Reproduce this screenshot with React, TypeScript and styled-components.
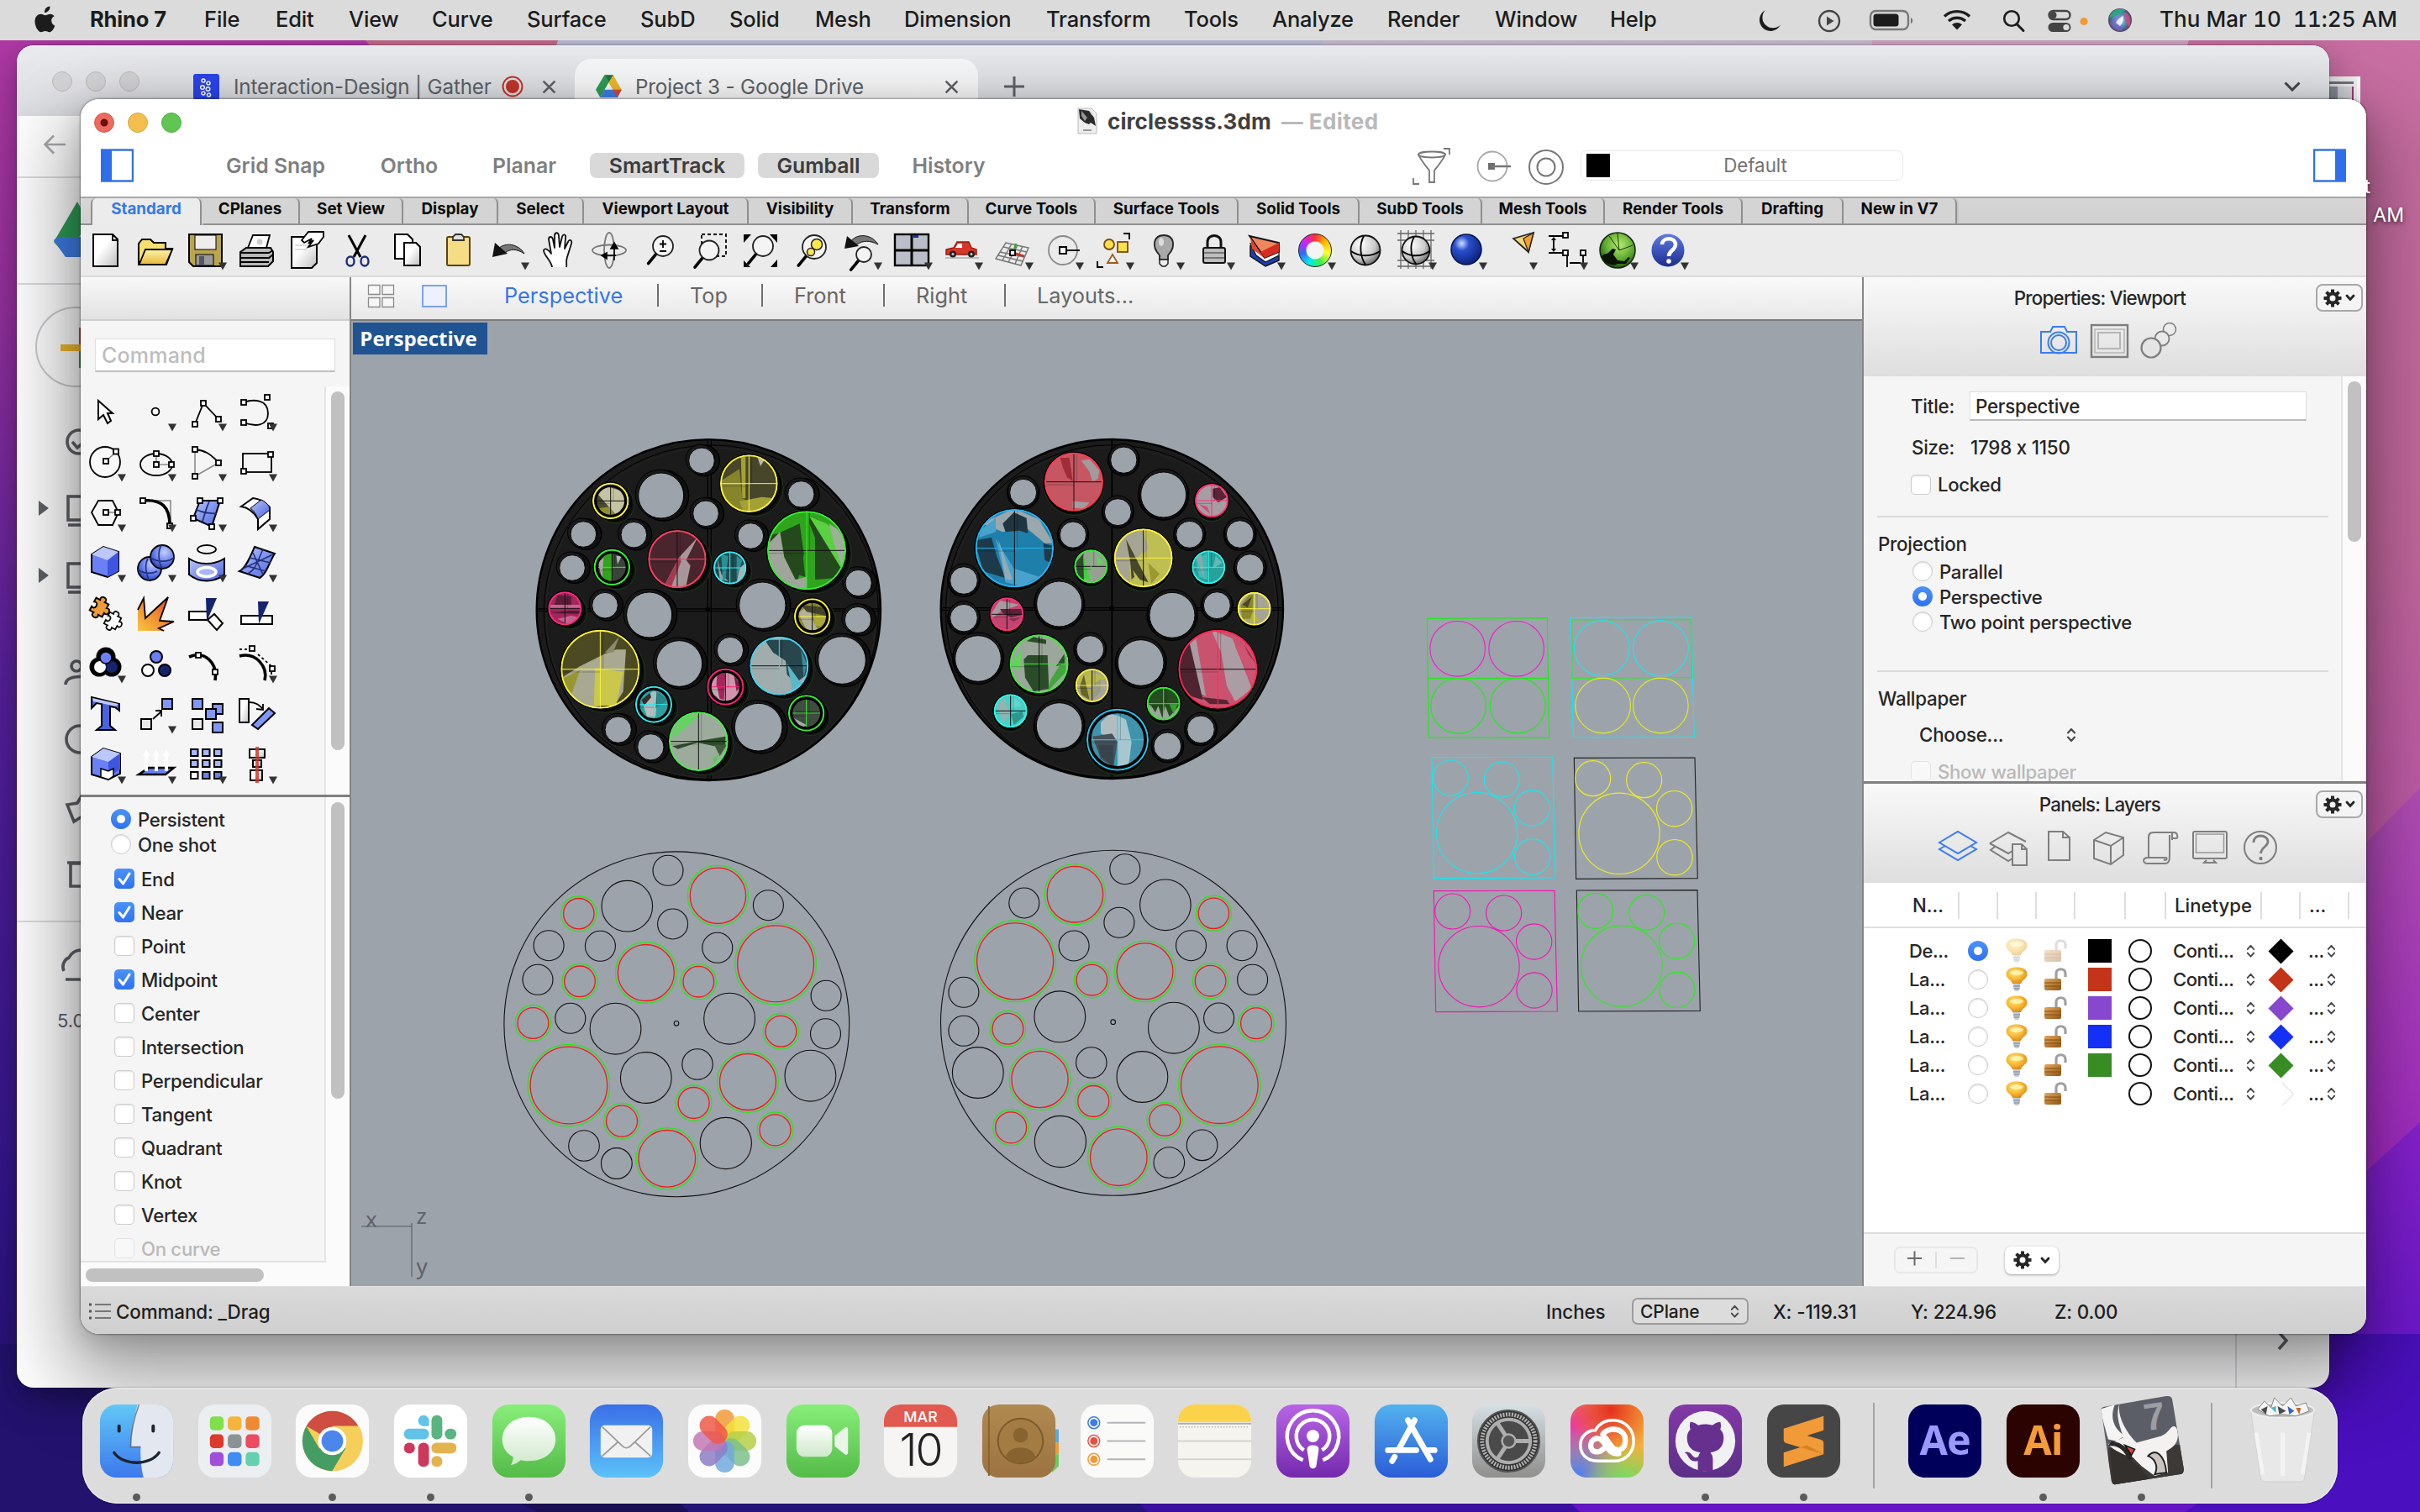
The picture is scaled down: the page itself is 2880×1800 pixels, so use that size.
import React from 'react';
import styled, { createGlobalStyle, css } from 'styled-components';

const UI = '"Inter", "Liberation Sans", sans-serif';
const SCENE = '#9da3ab';

const Global = createGlobalStyle`
  html, body { margin: 0; padding: 0; width: 2880px; height: 1800px; overflow: hidden; }
  * { box-sizing: border-box; }
  body { font-family: ${UI}; color: #262626; font-size: 24px; }
  svg { display: block; flex: none; }
`;

/* ---------- desktop ---------- */

const Desktop = styled.main`
  position: relative;
  width: 2880px;
  height: 1800px;
  overflow: hidden;
`;

const WallpaperSvg = styled.svg`
  position: absolute;
  inset: 0;
`;

function Wallpaper() {
  return (
    <WallpaperSvg width="2880" height="1800" viewBox="0 0 2880 1800">
      <defs>
        <linearGradient id="wr" x1="0" y1="0" x2="0" y2="1">
          <stop offset="0" stopColor="#c96fa3" />
          <stop offset=".35" stopColor="#c56a9f" />
          <stop offset=".56" stopColor="#c25aac" />
        </linearGradient>
        <linearGradient id="wl" x1="0" y1="0" x2="0" y2="1">
          <stop offset="0" stopColor="#b43aa6" />
          <stop offset=".2" stopColor="#96309f" />
          <stop offset=".45" stopColor="#56209a" />
          <stop offset=".8" stopColor="#32168a" />
          <stop offset="1" stopColor="#20126a" />
        </linearGradient>
        <linearGradient id="wm" x1="0" y1="0" x2="0" y2="1">
          <stop offset="0" stopColor="#b650b8" />
          <stop offset="1" stopColor="#a022cc" />
        </linearGradient>
        <linearGradient id="wv" x1="0" y1="0" x2="0" y2="1">
          <stop offset="0" stopColor="#8a22d2" />
          <stop offset="1" stopColor="#5810cf" />
        </linearGradient>
      </defs>
      <rect width="2880" height="1800" fill="url(#wr)" />
      <rect width="1400" height="1800" fill="url(#wl)" />
      <path d="M435 48H700L640 90H470Z" fill="#c46a8c" />
      <path d="M664 48H2020V90H650Z" fill="#bcbdd6" />
      <path d="M1574 48H2230V90H1574Z" fill="#cbbdd2" />
      <path d="M2228 48H2605L2590 90H2228Z" fill="#d0a3c4" />
      <path d="M2880 938L2700 1120V1500H2880Z" fill="url(#wm)" />
      <path d="M2880 1336L2700 1500V1800H2880Z" fill="url(#wv)" />
      <path d="M0 1600H2880V1800H0Z" fill="#23136f" />
      <path d="M600 1780L790 1775L830 1800H640Z" fill="#1a0f55" />
      <path d="M790 1770H1340L1370 1800H820Z" fill="#25147a" />
      <path d="M1330 1760H1850L1885 1800H1365Z" fill="#3a0fa2" />
      <path d="M1850 1770H2700L2640 1800H1880Z" fill="#6514c8" />
      <path d="M2600 1800C2700 1740 2720 1640 2730 1588H2880V1800Z" fill="#4a0fbe" />
    </WallpaperSvg>
  );
}

/* ---------- menu bar ---------- */

const MenuBarRow = styled.header`
  position: absolute;
  inset: 0 0 auto 0;
  height: 48px;
  display: flex;
  align-items: center;
  background: #dbdbdb;
  color: #1c1c1c;
  font-size: 25.5px;
  letter-spacing: -0.15px;
  padding-left: 39px;
`;
const MenuItem = styled.span<{ $w: number; $bold?: boolean }>`
  width: ${(p) => p.$w}px;
  padding-bottom: 3px;
  white-space: pre;
  font-weight: ${(p) => (p.$bold ? 700 : 450)};
`;
const StatusGlyphs = styled.svg`
  margin-left: auto;
  margin-right: 28px;
`;
const Clock = styled.span`
  white-space: pre;
  width: 310px;
  padding-bottom: 3px;
  font-size: 26px;
  font-weight: 450;
  font-variant-numeric: tabular-nums;
  letter-spacing: 0.05px;
`;

const MENUS: [string, number][] = [
  ['File', 85], ['Edit', 87], ['View', 99], ['Curve', 113], ['Surface', 135], ['SubD', 106],
  ['Solid', 102], ['Mesh', 106], ['Dimension', 169], ['Transform', 164], ['Tools', 105],
  ['Analyze', 137], ['Render', 128], ['Window', 137], ['Help', 60],
];

function MenuBar() {
  return (
    <MenuBarRow>
      <svg width="68" height="34" viewBox="0 0 68 34">
        <path
          fill="#1c1c1c"
          d="M20.5 0.5c.2 2.3-.7 4.2-2 5.6c-1.3 1.4-3 2.1-4.6 2c-.2-2.2.8-4.2 2-5.5c1.3-1.3 3.1-2.1 4.6-2.1zM25.5 12.2c-2.2 1.4-3.3 3-3.3 5.4c0 2.9 1.6 5 4.1 6.1c-1 3-3.7 7.6-6.6 7.6c-1.9 0-2.5-1.2-4.8-1.2c-2.3 0-3 1.2-4.8 1.2C6.5 31.3 2.5 24.5 2.5 18.5c0-5.4 3.4-8.7 7.2-8.7c2.2 0 3.9 1.5 5.3 1.5c1.4 0 3.3-1.6 6-1.6c1.9 0 3.5.9 4.5 2.5z"
        />
      </svg>
      <MenuItem $w={136} $bold>Rhino 7</MenuItem>
      {MENUS.map(([t, w]) => <MenuItem key={t} $w={w}>{t}</MenuItem>)}
      <StatusGlyphs width="450" height="48" viewBox="2093 0 450 48">
        <path d="M2102 12A13.2 13.2 0 1 0 2120 29.500A12.500 12.500 0 0 1 2102 12Z" fill="#1c1c1c" />
        <g fill="none" stroke="#444" strokeWidth="2.4">
          <circle cx="2178" cy="25" r="12" />
          <path d="M2175 19.500l8.500 5.500l-8.500 5.500z" fill="#444" stroke="none" />
          <rect x="2227" y="13" width="45" height="22" rx="6.5" stroke="#777" />
          <rect x="2230.5" y="16.5" width="30" height="15" rx="3.5" fill="#1c1c1c" stroke="none" />
          <path d="M2275 21v7c3-1 3-6 0-7z" fill="#777" stroke="none" />
        </g>
        <g fill="none" stroke="#1c1c1c" strokeWidth="3.4">
          <path d="M2315 19.500a22 22 0 0 1 30 0" />
          <path d="M2320 25a15 15 0 0 1 20 0" />
        </g>
        <path d="M2324 29.300a9 9 0 0 1 12 0L2330 35.500z" fill="#1c1c1c" />
        <circle cx="2395" cy="22" r="8.8" fill="none" stroke="#1c1c1c" strokeWidth="2.6" />
        <path d="M2401 28.500l8 8" stroke="#1c1c1c" strokeWidth="3" strokeLinecap="round" />
        <rect x="2439.5" y="13" width="25" height="10" rx="5" fill="none" stroke="#444" strokeWidth="2.4" />
        <circle cx="2444.5" cy="18" r="4" fill="#444" />
        <rect x="2438.5" y="27" width="27" height="11" rx="5.5" fill="#444" />
        <circle cx="2460" cy="32.5" r="3.6" fill="#dbdbdb" />
        <circle cx="2481" cy="25.5" r="4.6" fill="#f19a38" />
        <defs>
          <radialGradient id="siri" cx=".5" cy=".5" r=".5">
            <stop offset="0" stopColor="#e8f6ff" />
            <stop offset=".45" stopColor="#4fa0c8" />
            <stop offset="1" stopColor="#51405e" />
          </radialGradient>
        </defs>
        <circle cx="2524" cy="24" r="14" fill="url(#siri)" />
        <path d="M2511 21a14 14 0 0 1 20-9c-6 4-11 7-20 9z" fill="#2fa184" />
        <path d="M2530 14a14 14 0 0 1 5 18c-4-3-7-9-5-18z" fill="#d54a7d" opacity=".8" />
        <path d="M2512 28c4-6 10-10 14-11c-2 8-2 14 1 20a14 14 0 0 1-15-9z" fill="#7e5fc4" opacity=".6" />
        <path d="M2519 27c3-5 6-7 9-8c0 5-1 9-4 12z" fill="#fff" opacity=".8" />
      </StatusGlyphs>
      <Clock>Thu Mar 10  11:25 AM</Clock>
    </MenuBarRow>
  );
}

/* ---------- desktop files ---------- */

const ThumbFile = styled.div`
  position: absolute;
  left: 2760px;
  top: 91px;
  width: 49px;
  height: 40px;
  background: #f4f4f6;
  border-right: 4px solid #fff;
  padding: 6px 4px 0 10px;
  display: flex;
  flex-direction: column;
  gap: 3px;
  &::before { content: ''; height: 3px; background: #77777c; }
  &::after { content: ''; flex: 1; background: linear-gradient(90deg, #8f96a4 40%, #d8dade 40%); border-right: 2px solid #a33a7a; }
`;
const FileName = styled.div`
  position: absolute;
  left: 2700px;
  top: 205px;
  width: 161px;
  color: #fff;
  font-size: 23px;
  line-height: 34px;
  text-align: right;
  text-shadow: 0 2px 5px rgba(0, 0, 0, 0.7);
  span { display: block; }
  span:first-child { padding-right: 40px; }
`;

/* ---------- browser window behind ---------- */

const BrowserWindow = styled.section`
  position: absolute;
  left: 20px;
  top: 54px;
  width: 2752px;
  height: 1598px;
  border-radius: 20px;
  overflow: hidden;
  background: #fff;
  display: flex;
  flex-direction: column;
`;
const BrowserShadow = styled.div`
  position: absolute;
  left: 20px;
  top: 54px;
  width: 2752px;
  height: 1598px;
  border-radius: 20px;
  box-shadow: 0 0 2px rgba(0, 0, 0, 0.6), 0 14px 40px rgba(0, 0, 0, 0.35);
`;
const TabStrip = styled.div`
  height: 84px;
  flex: none;
  background: linear-gradient(#e9ebee, #dfe1e5 80%, #d9dbe0);
  display: flex;
  align-items: flex-start;
  color: #5f6368;
  font-size: 24.2px;
  border-top: 1px solid #f8f8f8;
`;
const GreyLights = styled.div`
  display: flex;
  gap: 16px;
  padding: 30px 0 0 42px;
  width: 210px;
  i { width: 24px; height: 24px; border-radius: 50%; background: #d5d5d7; border: 1px solid #bcbcbe; }
`;
const BrowserTab = styled.div<{ $active?: boolean; $w: number; $pad: number }>`
  display: flex;
  align-items: center;
  width: ${(p) => p.$w}px;
  height: 69px;
  margin-top: 15px;
  padding: 0 0 3px ${(p) => p.$pad}px;
  white-space: nowrap;
  letter-spacing: -0.15px;
  border-radius: 20px 20px 0 0;
  ${(p) => p.$active && css`background: linear-gradient(#f8f9fa, #fff);`}
`;
const TabTitle = styled.span<{ $w: number; $gap: number }>`
  margin-left: ${(p) => p.$gap}px;
  width: ${(p) => p.$w}px;
`;
const BrowserBar = styled.div`
  height: 74px;
  flex: none;
  border-bottom: 2px solid #dadce0;
  padding: 22px 0 0 31px;
`;
const BrowserBody = styled.div`
  flex: 1;
  display: flex;
  justify-content: space-between;
`;
const DriveRail = styled.div`
  width: 110px;
`;
const SidePanel = styled.div`
  width: 112px;
  border-left: 2px solid #dadce0;
  display: flex;
  align-items: flex-end;
  justify-content: center;
  padding-bottom: 44px;
`;

const Cross = () => (
  <svg width="17" height="17" viewBox="0 0 16 16"><path d="M1.500 1.500l13 13M14.500 1.500l-13 13" stroke="#5f6368" strokeWidth="2.4" /></svg>
);

const DriveLogo = ({ w }: { w: number }) => (
  <svg width={w} height={w * 0.9} viewBox="0 0 90 80">
    <path d="M30 0H60L89 51H59Z" fill="#f2b92c" />
    <path d="M30 0L0 51L15 78L45 26Z" fill="#2f9e57" />
    <path d="M15 78H75L89 51H30Z" fill="#3f7ee8" />
    <path d="M75 78L89 51H59Z" fill="#dd4a3c" />
    <path d="M30 0L45 26L60 0Z" fill="#1f7a3f" />
  </svg>
);

function Browser() {
  return (
    <BrowserWindow>
      <TabStrip>
        <GreyLights><i /><i /><i /></GreyLights>
        <BrowserTab $w={454} $pad={0}>
          <svg width="31" height="31" viewBox="0 0 31 31">
            <rect width="31" height="31" rx="3" fill="#2a45f0" />
            <g fill="none" stroke="#fff" strokeWidth="1.5">
              <circle cx="12" cy="8" r="2" /><circle cx="18" cy="11" r="2" /><circle cx="11" cy="16" r="2.3" />
              <circle cx="17.5" cy="18" r="2.3" /><circle cx="12" cy="23" r="2" /><circle cx="18.5" cy="25" r="2" />
            </g>
          </svg>
          <TabTitle $w={319} $gap={17}>Interaction-Design | Gather</TabTitle>
          <svg width="26" height="26" viewBox="0 0 26 26">
            <circle cx="13" cy="13" r="11.5" fill="none" stroke="#c5362b" strokeWidth="2" /><circle cx="13" cy="13" r="8" fill="#c5362b" />
          </svg>
          <svg width="22" height="2" />
          <Cross />
        </BrowserTab>
        <BrowserTab $active $w={480} $pad={25}>
          <DriveLogo w={31} />
          <TabTitle $w={368} $gap={16}>Project 3 - Google Drive</TabTitle>
          <Cross />
        </BrowserTab>
        <BrowserTab $w={1564} $pad={31}>
          <svg width="24" height="24" viewBox="0 0 24 24"><path d="M12 0V24M0 12H24" stroke="#5f6368" strokeWidth="3" /></svg>
          <svg width="1499" height="2" />
          <svg width="20" height="12" viewBox="0 0 20 12"><path d="M1.500 1.500L10 10L18.500 1.500" fill="none" stroke="#45484c" strokeWidth="3" /></svg>
        </BrowserTab>
      </TabStrip>
      <BrowserBar>
        <svg width="27" height="24" viewBox="0 0 27 24"><path d="M27 12H3M13 1.500L2.500 12L13 22.500" fill="none" stroke="#a6a8ab" strokeWidth="2.6" /></svg>
      </BrowserBar>
      <BrowserBody>
        <DriveRail>
          <svg width="110" height="1436" viewBox="20 212 110 1436">
            <path d="M64 288L92 240L105 264L80 306Z" fill="#2f9e57" />
            <path d="M64 286L78 306H130V282H68Z" fill="#3f7ee8" />
            <path d="M20 338H130M20 1097H130" stroke="#dadce0" strokeWidth="2" />
            <circle cx="90" cy="413" r="47" fill="#fff" stroke="#c9cbcf" strokeWidth="2" />
            <path d="M72 410H96V418H72Z" fill="#f2b92c" />
            <path d="M94 390H102V410H94Z" fill="#d8453c" />
            <path d="M94 418H102V438H94Z" fill="#2f9e57" />
            <g fill="none" stroke="#5f6368" strokeWidth="3.6">
              <circle cx="94" cy="526" r="14" /><path d="M86 526l6 7l12-10" />
              <rect x="81" y="591" width="28" height="28" /><path d="M81 625H110" />
              <rect x="81" y="671" width="28" height="28" /><path d="M81 705H110" />
              <circle cx="91" cy="793" r="6" /><path d="M78 815c0-10 20-12 30-6" />
              <circle cx="95" cy="880" r="16" />
              <path d="M80 958l12-2l6-10l5 10l10 3l-10 8l3 12l-10-6l-8 5z" />
              <path d="M82 1028H110V1055H84V1028M80 1027H112" />
              <path d="M76 1156a12 12 0 0 1 6-16a17 17 0 0 1 30 0M78 1166h20" />
            </g>
            <path d="M46 596L58 605L46 614ZM46 676L58 685L46 694Z" fill="#5f6368" />
            <text x="68" y="1223" fontFamily={UI} fontSize="22" fill="#5f6368">5.0</text>
          </svg>
        </DriveRail>
        <SidePanel>
          <svg width="14" height="24" viewBox="0 0 14 24"><path d="M2 2L11 12L2 22" fill="none" stroke="#5f6368" strokeWidth="3.4" /></svg>
        </SidePanel>
      </BrowserBody>
    </BrowserWindow>
  );
}

/* ---------- modeller window ---------- */

const AppWindow = styled.section`
  position: absolute;
  left: 96px;
  top: 118px;
  width: 2720px;
  height: 1470px;
  border-radius: 22px;
  overflow: hidden;
  display: flex;
  flex-direction: column;
  background: #f5f5f5;
`;
const AppShadow = styled.div`
  position: absolute;
  left: 96px;
  top: 118px;
  width: 2720px;
  height: 1470px;
  border-radius: 22px;
  box-shadow: 0 0 2px 1px rgba(0, 0, 0, 0.35), 0 40px 90px 20px rgba(0, 0, 0, 0.36), 0 10px 30px rgba(0, 0, 0, 0.16);
`;
const TitleBar = styled.div`
  height: 116px;
  flex: none;
  background: #fff;
  display: flex;
  flex-direction: column;
`;
const TitleRow = styled.div`
  display: grid;
  grid-template-columns: 1186px 1fr;
  align-items: center;
  height: 56px;
`;
const Lights = styled.div`
  display: flex;
  gap: 16px;
  padding-left: 16px;
`;
const Light = styled.i<{ $c: string; $b: string; $dot?: boolean }>`
  width: 24px;
  height: 24px;
  border-radius: 50%;
  background: ${(p) => (p.$dot ? `radial-gradient(circle, #6b0d08 0 4px, ${p.$c} 5px)` : p.$c)};
  border: 1px solid ${(p) => p.$b};
`;
const DocTitle = styled.div`
  display: flex;
  align-items: center;
  gap: 12px;
  padding-bottom: 4px;
  font-size: 26px;
  letter-spacing: 0.1px;
  font-weight: 700;
  color: #404040;
  em { font-style: normal; color: #b9b9b9; letter-spacing: 0.4px; }
`;
const ModeRow = styled.div`
  display: flex;
  align-items: center;
  height: 46px;
  padding: 0 24px;
`;
const ModeButton = styled.span<{ $w: number; $on?: boolean; $ml: number }>`
  width: ${(p) => p.$w}px;
  margin-left: ${(p) => p.$ml}px;
  height: 30px;
  line-height: 30px;
  border-radius: 8px;
  text-align: center;
  white-space: nowrap;
  font-size: 24.8px;
  font-weight: 600;
  color: ${(p) => (p.$on ? '#3c3c3c' : '#7f7f7f')};
  background: ${(p) => (p.$on ? '#d9d9d9' : 'transparent')};
`;
const FilterGlyphs = styled.svg`
  margin-left: 487px;
`;
const Spacer = styled.div`
  flex: 1;
`;
const LayerField = styled.div`
  display: flex;
  align-items: center;
  width: 384px;
  height: 36px;
  margin-left: 20px;
  padding-left: 6px;
  border: 1.5px solid #e8e8e8;
  border-radius: 7px;
  color: #727272;
  font-size: 22.3px;
  i { width: 28px; height: 28px; background: #000; }
  span { flex: 1; text-align: center; padding: 0 14px 2px 0; margin-right: -12px; }
`;
const ToolTabs = styled.nav`
  display: flex;
  height: 34px;
  flex: none;
  padding-left: 12px;
  border-top: 2px solid #a6a6a6;
  border-bottom: 2px solid #8f8f8f;
  background: linear-gradient(#d6d6d6, #d0d0d0);
`;
const ToolTab = styled.span<{ $w: number; $on?: boolean }>`
  width: ${(p) => p.$w}px;
  height: ${(p) => (p.$on ? 32 : 30)}px;
  line-height: 26px;
  border-radius: 6px 6px 0 0;
  border-right: 2px solid #8f8f8f;
  border-left: ${(p) => (p.$on ? '2px solid #8f8f8f' : 'none')};
  box-shadow: 2px 0 1px #c4c4c4;
  background: ${(p) => (p.$on ? '#ececec' : '#d4d4d4')};
  color: ${(p) => (p.$on ? '#3679ea' : '#0c0c0c')};
  font-size: 18.8px;
  font-weight: 700;
  text-align: center;
  white-space: nowrap;
`;
const ToolRow = styled.div`
  display: flex;
  height: 62px;
  flex: none;
  background: #ebebeb;
  border-bottom: 2px solid #dadada;
`;
const Body = styled.div`
  display: flex;
  flex: 1;
  min-height: 0;
`;
const StatusBar = styled.footer`
  display: flex;
  align-items: center;
  height: 57px;
  flex: none;
  padding: 2px 0 0 10px;
  background: linear-gradient(#dadada, #cfcfcf);
  border-top: 1px solid #e2e2e2;
  font-size: 22.4px;
  font-weight: 450;
  letter-spacing: -0.1px;
  color: #1e1e1e;
`;
const StatusText = styled.span<{ $w: number }>`
  width: ${(p) => p.$w}px;
  white-space: nowrap;
`;
const Select = styled.span`
  display: flex;
  align-items: center;
  justify-content: space-between;
  width: 139px;
  height: 32px;
  margin-right: 29px;
  padding: 0 9px 0 8px;
  border: 2px solid #9c9c9c;
  border-radius: 7px;
  background: #dcdcdc;
  font-size: 21px;
`;

const TABS: [string, number][] = [
  ['Standard', 132], ['CPlanes', 117], ['Set View', 123], ['Display', 113], ['Select', 102],
  ['Viewport Layout', 196], ['Visibility', 124], ['Transform', 138], ['Curve Tools', 151],
  ['Surface Tools', 170], ['Solid Tools', 144], ['SubD Tools', 146], ['Mesh Tools', 146],
  ['Render Tools', 164], ['Drafting', 120], ['New in V7', 135],
];

/* ---------- icon helpers ---------- */

const Wheel = styled.div`
  width: 40px;
  height: 40px;
  border-radius: 50%;
  border: 1.5px solid #222;
  background: radial-gradient(circle, #f4f4f4 0 10px, transparent 11px), conic-gradient(#f33, #fb0, #ff3, #4e4, #0ee, #36f, #c2f, #f33);
`;
const HiddenSvg = styled.svg`
  position: absolute;
`;

const H = ({ x, y }: { x: number; y: number }) => (
  <rect x={x - 3} y={y - 3} width="6" height="6" fill="#fff" stroke="#000" strokeWidth="1.8" />
);
const MenuMark = () => <path d="M15 14.500H25L20 23.500Z" fill="#333" />;
const line = { fill: 'none', stroke: '#000', strokeWidth: 1.8 } as const;
const soft = { fill: 'none', stroke: '#8a8a8a', strokeWidth: 1.6 } as const;
const Lens = ({ x, y, r }: { x: number; y: number; r: number }) => (
  <>
    <path d={`M${x - r * 0.7} ${y + r * 0.8}L${x - r * 0.7 - 9} ${y + r * 0.8 + 11}`} stroke="#000" strokeWidth="3.6" strokeLinecap="round" />
    <circle cx={x} cy={y} r={r} fill="#f4f4f4" stroke="#222" strokeWidth="1.8" />
  </>
);

const IconDefs = () => (
  <HiddenSvg width="0" height="0">
    <defs>
      <linearGradient id="paper" x1="0" x2="1" y1="0" y2="1"><stop offset=".4" stopColor="#fff" /><stop offset="1" stopColor="#bdbdbd" /></linearGradient>
      <linearGradient id="gold" x1="0" x2="0" y1="0" y2="1"><stop offset="0" stopColor="#fdf3a8" /><stop offset="1" stopColor="#e9b93c" /></linearGradient>
      <linearGradient id="blue" x1="0" x2="1" y1="0" y2="1"><stop offset="0" stopColor="#b9c6fa" /><stop offset="1" stopColor="#4a62e0" /></linearGradient>
      <linearGradient id="flame" x1="0" x2="1" y1="1" y2="0"><stop offset="0" stopColor="#f9c440" /><stop offset=".5" stopColor="#f08a30" /><stop offset="1" stopColor="#e03a20" /></linearGradient>
      <radialGradient id="ball" cx=".35" cy=".3" r=".8"><stop offset="0" stopColor="#fff" /><stop offset=".6" stopColor="#c9c9c9" /><stop offset="1" stopColor="#555" /></radialGradient>
      <radialGradient id="bball" cx=".35" cy=".3" r=".8"><stop offset="0" stopColor="#cfe0ff" /><stop offset=".3" stopColor="#2a50cc" /><stop offset="1" stopColor="#081a70" /></radialGradient>
      <radialGradient id="sball" cx=".6" cy=".3" r=".8"><stop offset="0" stopColor="#c5d0ff" /><stop offset=".6" stopColor="#5b74e6" /><stop offset="1" stopColor="#1c2f96" /></radialGradient>
      <radialGradient id="gball" cx=".55" cy=".35" r=".7"><stop offset="0" stopColor="#b7ee72" /><stop offset=".6" stopColor="#5aa62c" /><stop offset="1" stopColor="#173c0c" /></radialGradient>
      <linearGradient id="help" x1="0" x2="0" y1="0" y2="1"><stop offset="0" stopColor="#5f78e8" /><stop offset="1" stopColor="#1d2f8c" /></linearGradient>
      <radialGradient id="lampg" cx=".4" cy=".35" r=".7"><stop offset="0" stopColor="#ffe678" /><stop offset=".55" stopColor="#f7b733" /><stop offset="1" stopColor="#d8841a" /></radialGradient>
      <linearGradient id="lockg" x1="0" x2="1" y1="0" y2="1"><stop offset="0" stopColor="#e8a75a" /><stop offset="1" stopColor="#8f5513" /></linearGradient>
    </defs>
  </HiddenSvg>
);

type Glyph = { d: React.ReactNode; m?: boolean };

const TOOLBAR: Glyph[] = [
  { d: <><path d="M-14 -19H9L15 -13V19H-14Z" fill="url(#paper)" stroke="#000" strokeWidth="2" /><path d="M9 -19V-12H15" {...line} /></> },
  { d: <><path d="M-20 16V-8L-16 -13H-6L-2 -9H12V-2H20L13 17H-20Z" fill="#f7df70" stroke="#000" strokeWidth="2" /><path d="M-19 16L-12 -1H20L12 17H-19Z" fill="url(#gold)" stroke="#000" strokeWidth="1.8" /></> },
  { m: true, d: <><path d="M-20 -19H19V19H-15L-20 14Z" fill="#b9a54e" stroke="#000" strokeWidth="2" /><rect x="-13" y="-18" width="25" height="17" fill="#ededed" stroke="#000" /><rect x="-12" y="5" width="21" height="13" fill="#9a9a9a" stroke="#000" /><rect x="-8" y="7" width="6" height="10" fill="#556" /></> },
  { d: <><path d="M-10 -3L-4 -18H16L12 -3Z" fill="#fff" stroke="#000" strokeWidth="1.8" /><path d="M-19 2L-12 -3H17L20 2V13L14 19H-19Z" fill="#b9b9b9" stroke="#000" strokeWidth="2" /><path d="M-19 3H15L20 0M-19 9H15L20 5M-19 14H15" {...line} /><circle cx="4" cy="-10" r="3.5" fill="#ccc" /></> },
  { d: <><path d="M-18 -16H4L12 -8V15L6 21H-18Z" fill="url(#paper)" stroke="#000" strokeWidth="2" /><path d="M-14 -6H2M-14 -1H0" stroke="#bbb" /><path d="M-6 -12L2 -22H20V-16L14 -8L2 -4L8 -12L2 -8L6 -14L-3 -9Z" fill="#fff" stroke="#000" strokeWidth="1.8" /></> },
  { d: <><path d="M-10 -18L4 8M10 -18L-4 8" stroke="#000" strokeWidth="3" /><ellipse cx="-8" cy="13" rx="4.5" ry="5.5" fill="none" stroke="#1c2f7c" strokeWidth="2.4" /><ellipse cx="9" cy="13" rx="4.5" ry="5.5" fill="none" stroke="#1c2f7c" strokeWidth="2.4" /></> },
  { d: <><path d="M-15 -19H0L6 -13V10H-15Z" fill="#fff" stroke="#000" strokeWidth="2" /><path d="M-4 -9H10L15 -4V18H-4Z" fill="url(#paper)" stroke="#000" strokeWidth="2" /></> },
  { d: <><rect x="-13" y="-16" width="27" height="34" rx="2" fill="#f6dc84" stroke="#5a4310" strokeWidth="2" /><path d="M-6 -12V-16L-3 -19H4L7 -16V-12Z" fill="#ddd" stroke="#333" strokeWidth="1.8" /></> },
  { m: true, d: <><path d="M-12 -2C-4 -10 12 -8 19 4C10 -2 2 -2 -4 3Z" fill="#777" stroke="#111" /><path d="M-19 8L-16 -9L-1 4Z" fill="#111" /></> },
  { d: <path d="M-8 20C-9 12 -18 6 -18 0C-16 -4 -12 0 -9 4L-12 -13C-12 -17 -8 -17 -7 -13L-5 -3V-17C-5 -22 0 -22 0 -17L1 -4L4 -16C5 -20 9 -19 8 -15L7 -2L11 -10C13 -14 16 -12 15 -8L10 8C8 14 10 16 9 20" fill="#fff" stroke="#111" strokeWidth="1.8" strokeLinejoin="round" /> },
  { d: <><ellipse rx="20" ry="6.5" fill="none" stroke="#777" strokeWidth="1.8" /><ellipse rx="6" ry="21" fill="none" stroke="#777" strokeWidth="1.8" /><path d="M6 12V-6M2 -2L6 -9L10 -2ZM-8 6H8M-3 3L-9 6L-3 10Z" fill="#000" stroke="#000" strokeWidth="1.6" /></> },
  { d: <><Lens x={4} y={-5} r={12} /><path d="M4 -12V-3M0 -7.500H8M0 1H8" stroke="#000" strokeWidth="1.8" /></> },
  { d: <><rect x="-10" y="-19" width="29" height="26" fill="none" stroke="#000" strokeWidth="1.8" strokeDasharray="4 3" /><Lens x={-1} y={0} r={11.5} /></> },
  { d: <><Lens x={3} y={-5} r={12} /><path d="M-20 -19H-11L-20 -9ZM20 -19H11L20 -9ZM-20 20H-12L-20 12ZM20 20H12L20 11Z" fill="#000" /></> },
  { d: <><Lens x={4} y={-4} r={14} /><circle cx="7" cy="-7" r="6.5" fill="#fbe94c" stroke="#222" strokeWidth="1.5" /><circle cx="0" cy="2" r="4.5" fill="#fbe94c" stroke="#222" strokeWidth="1.5" /></> },
  { m: true, d: <><Lens x={3} y={5} r={9} /><path d="M-14 -9C-6 -21 12 -20 20 -7C10 -12 2 -12 -5 -7Z" fill="#777" stroke="#111" /><path d="M-20 -2L-17 -17L-3 -5Z" fill="#111" /></> },
  { m: true, d: <><rect x="-20" y="-19" width="40" height="37" fill="#b9bec8" stroke="#000" strokeWidth="2.4" /><path d="M0 -19V18M-20 0H20" stroke="#000" strokeWidth="3" /><path d="M2 -18H8V-15H2Z" fill="#1030a0" /></> },
  { m: true, d: <><path d="M-20 9H20" stroke="#bbb" strokeWidth="2" /><path d="M-19 5V-1L-10 -3L-6 -10H8L11 -3L17 -1V5Z" fill="#d6372b" stroke="#a0180e" strokeWidth="1.5" /><path d="M-5 -8H0V-3H-8Z" fill="#fff" /><circle cx="-11" cy="4.5" r="4" fill="#222" /><circle cx="11" cy="4.5" r="4" fill="#222" /><circle cx="-11" cy="4.5" r="1.5" fill="#ccc" /><circle cx="11" cy="4.5" r="1.5" fill="#ccc" /></> },
  { m: true, d: <><path d="M-8 -9L19 -3L10 18L-20 10ZM-1 -8L-12 12M6 -6L-5 14M12 -5L3 16M-11 -4L17 2M-15 2L14 8M-17 6L12 13" fill="none" stroke="#777" strokeWidth="1.5" /><path d="M1 3L4 -8" stroke="#3aa52c" strokeWidth="2.4" /><path d="M1 3L14 7" stroke="#d03020" strokeWidth="2.4" /><H x={0} y={3} /></> },
  { m: true, d: <><circle r="17" fill="none" stroke="#8a8a8a" strokeWidth="1.8" /><path d="M0 0H20" {...line} /><rect x="-4" y="-4" width="8" height="8" fill="#fff" stroke="#000" strokeWidth="2" /></> },
  { m: true, d: <><path d="M12 -20H19V-13M-12 20H-19V13" {...line} /><circle cx="-5" cy="-7" r="6" fill="#fbe04c" stroke="#7a4a10" strokeWidth="1.8" /><rect x="5" y="-10" width="12" height="12" fill="#fbe04c" stroke="#7a4a10" strokeWidth="1.8" /><path d="M-1 5L-7 15H5Z" fill="#fff" stroke="#a05a18" strokeWidth="1.8" /></> },
  { m: true, d: <><path d="M-5 11V6C-16 -6 -11 -18 0 -18C11 -18 16 -6 5 6V11Z" fill="#a9a9a9" stroke="#222" strokeWidth="1.8" /><ellipse cx="-3" cy="-10" rx="3" ry="5" fill="#ddd" /><path d="M-5 11H5V16L2 19H-2L-5 16Z" fill="#eee" stroke="#222" strokeWidth="1.5" /></> },
  { m: true, d: <><path d="M-8 -2V-10C-8 -20 8 -20 8 -10V-2" fill="none" stroke="#111" strokeWidth="3" /><rect x="-13" y="-3" width="26" height="18" rx="2" fill="#bdbdbd" stroke="#111" strokeWidth="2" /><path d="M-12 3H12M-12 9H12" stroke="#777" strokeWidth="2" /></> },
  { m: true, d: <><path d="M-17 -6V7L1 19L17 12V6" fill="#1d3fb4" stroke="#111" strokeWidth="1.5" /><path d="M-17 -8L-10 6L1 14L17 6V0Z" fill="#fff" stroke="#111" strokeWidth="1.2" /><path d="M-18 -17L17 -9V2L0 9Z" fill="#f0875c" stroke="#111" strokeWidth="1.8" /><path d="M-5 2L17 -9V2L0 9Z" fill="#d42c20" /><path d="M-17 -15L-15 -2L-1 9Z" fill="#e6442c" /></> },
  { m: true, d: <foreignObject x="-20" y="-20" width="40" height="40"><Wheel /></foreignObject> },
  { d: <><circle r="17.5" fill="url(#ball)" stroke="#111" strokeWidth="1.8" /><path d="M-2 -17C-8 -6 -6 8 0 17M-17 1C-8 8 8 8 17 1" {...line} /></> },
  { m: true, d: <><path d="M-22 -20H22M-22 -12H22M-22 12H22M-22 19H22M-18 -24V22M-9 -24V22M9 -24V22M18 -24V22M0 -24V22" stroke="#666" strokeWidth="1.3" /><circle r="16.5" fill="url(#ball)" stroke="#111" strokeWidth="1.8" /><path d="M-2 -16C-8 -6 -6 8 0 16M-16 1C-8 8 8 8 16 1" {...line} /></> },
  { m: true, d: <circle r="18" cy="-1" fill="url(#bball)" stroke="#06124c" strokeWidth="1.5" /> },
  { m: true, d: <><path d="M-4 -14L20 -21L14 2Z" fill="#f8d27a" stroke="#222" strokeWidth="1.8" /><path d="M8 -14L20 -21L14 2Z" fill="#f3a02c" stroke="#222" strokeWidth="1.2" /></> },
  { m: true, d: <><path d="M-22 -17H-4M-22 3H-4M-16 -14V0M0 6V20M19 6V20M3 15H16" {...line} /><path d="M-19 -12L-16 -16L-13 -12ZM-19 -2L-16 2L-13 -2Z" /><H x={-2} y={-18} /><H x={-2} y={3} /><H x={19} y={3} /></> },
  { m: true, d: <><circle r="21" fill="url(#gball)" stroke="#12240a" strokeWidth="1.5" /><path d="M-19 7C-14 2 -14 6 -10 2L-6 -2L-2 -1L-5 5L0 12L8 13L13 8L15 9L10 16L0 16C-6 20 -16 16 -19 7Z" fill="#0a1406" /><path d="M0 -20L2 0M-10 -17L2 0L18 -6" fill="none" stroke="#1a3a0a" /></> },
  { m: true, d: <><circle r="19.5" fill="url(#help)" /><path d="M-7 -7C-7 -16 9 -16 9 -7C9 0 1 0 1 7" fill="none" stroke="#fff" strokeWidth="4.5" /><circle cx="1" cy="13" r="2.8" fill="#fff" /></> },
];

const PIECE = 'M-8 -8H-3C-6 -14 6 -14 3 -8H8V-3C14 -6 14 6 8 3V8H3C6 14 -6 14 -3 8H-8V3C-2 6 -2 -6 -8 -3Z';

const PALETTE: Glyph[] = [
  { d: <path d="M-8 -13V9L-2 4L3 14L7 11L3 2H9Z" fill="#fff" stroke="#000" strokeWidth="2" /> },
  { m: true, d: <circle r="4.4" fill="#fff" stroke="#000" strokeWidth="1.8" /> },
  { m: true, d: <><path d="M-13 15L-3 -10L15 9" {...line} /><H x={-13} y={15} /><H x={-3} y={-10} /><H x={15} y={9} /></> },
  { m: true, d: <><path d="M-15 -11C-4 -15 14 -15 14 2C14 18 -2 18 -15 13" {...line} /><H x={-15} y={-11} /><H x={-15} y={13} /><H x={13} y={-17} /><H x={17} y={17} /></> },
  { m: true, d: <><circle r="18" fill="#fff" fillOpacity=".4" stroke="#000" strokeWidth="1.8" /><path d="M1 -1L13 -12" {...soft} /><H x={1} y={-1} /><H x={13} y={-12.5} /></> },
  { m: true, d: <><ellipse cx="1" cy="3" rx="19" ry="13" {...line} /><path d="M1 -10V3H19" {...soft} /><H x={1} y={-10} /><H x={1} y={3} /><H x={19} y={3} /></> },
  { m: true, d: <><path d="M-13 17V-14M-13 17L15 1" {...soft} /><path d="M-13 -15C-2 -14 6 -10 15 1" {...line} /><H x={-13} y={-15} /><H x={15} y={1} /><H x={-13} y={17} /></> },
  { m: true, d: <><rect x="-16" y="-10" width="34" height="22" {...line} /><H x={17} y={-9} /><H x={-15} y={11} /></> },
  { m: true, d: <><path d="M-16 0L-8 -14H9L16 0L9 15H-8Z" {...line} /><path d="M1 0H15" {...soft} /><H x={1} y={0} /><H x={15} y={0} /></> },
  { m: true, d: <><path d="M-15 -14H18V16" {...soft} /><path d="M-15 -14C8 -16 17 -6 17 15" fill="none" stroke="#000" strokeWidth="3.6" /><H x={-15} y={-14} /><H x={17} y={16} /></> },
  { m: true, d: <><path d="M-7 -14H17L7 17L-15 7Z" fill="url(#blue)" stroke="#000" strokeWidth="2" /><path d="M4 -13C0 -4 -2 4 -4 11M-12 -4C-4 2 6 0 13 2" stroke="#23307c" fill="none" strokeWidth="1.8" /><H x={-7} y={-14} /><H x={17} y={-14} /><H x={-15} y={7} /><H x={7} y={17} /></> },
  { m: true, d: <><path d="M-18 -7L-4 -17C4 -16 8 -14 16 -6V8L2 20V8C-4 -2 -10 -6 -18 -7Z" fill="#fff" stroke="#000" strokeWidth="2" /><path d="M-7 -5L6 -15C12 -12 16 -8 16 -3L2 8C0 2 -3 -2 -7 -5Z" fill="url(#blue)" stroke="#000" /></> },
  { m: true, d: <><path d="M-16 -10L-2 -19L16 -13V10L3 17L-16 11Z" fill="#6a80f4" stroke="#000" strokeWidth="2" /><path d="M-16 -10L-2 -19L16 -13L3 -3Z" fill="#bcc8fb" /><path d="M3 -3L16 -13V10L3 17Z" fill="#3f55e0" /></> },
  { m: true, d: <><circle cx="-7" cy="7" r="14" fill="url(#sball)" stroke="#000" strokeWidth="1.8" /><circle cx="8" cy="-7" r="14" fill="url(#sball)" stroke="#000" strokeWidth="1.8" /><path d="M-21 8C-12 14 -4 13 2 10M-9 -5C-14 4 -10 14 -8 21M-6 -6C2 -1 14 0 22 -6M7 -21C2 -12 4 0 8 7" stroke="#23307c" fill="none" strokeWidth="1.6" /></> },
  { m: true, d: <><ellipse cx="1" cy="-16" rx="11" ry="5" {...line} /><path d="M-20 -5C-8 3 10 3 22 -5V14C10 24 -8 24 -20 14Z" fill="url(#blue)" stroke="#000" strokeWidth="2" /><ellipse cx="1" cy="11" rx="11" ry="5.5" fill="#a6b6fb" stroke="#fff" strokeWidth="3.5" /></> },
  { m: true, d: <><path d="M-2 -19L22 -11C16 -2 12 14 4 18L-20 10C-12 6 -6 -10 -2 -19Z" fill="url(#blue)" stroke="#000" strokeWidth="2" /><path d="M8 -16C2 -4 0 8 -10 13M-8 -6L17 0M-14 3L11 10M-18 8L20 -10M-4 -12L8 14" stroke="#23307c" fill="none" strokeWidth="1.6" /></> },
  { d: <><path d={PIECE} transform="translate(-7 -7) rotate(28) scale(1.05)" fill="#f09a38" stroke="#000" strokeWidth="1.8" /><path d={PIECE} transform="translate(9 9) rotate(28) scale(.95)" fill="#fff" stroke="#000" strokeWidth="1.8" /></> },
  { d: <><path d="M-21 21V-4L-14 -18L-12 6L15 -19L5 8L22 10L4 18L12 21Z" fill="url(#flame)" /><path d="M-21 -4L-14 -18L-12 6L15 -19L5 9L22 10L4 18L10 21" {...line} /></> },
  { d: <><path d="M-20 -2H2V8H-20ZM2 8L10 1L20 12L13 20Z" fill="#fff" stroke="#000" strokeWidth="2" /><path d="M0 -18H13L1 10Z" fill="#16246e" /></> },
  { d: <><rect x="-18" y="3" width="37" height="10" fill="#fff" stroke="#000" strokeWidth="2" /><path d="M2 -14H15L3 13Z" fill="#16246e" /></> },
  { m: true, d: <><g stroke="#000" strokeWidth="7"><circle cx="1" cy="-8" r="8" /><circle cx="-7" cy="4" r="8" /><circle cx="8" cy="4" r="8" /></g><circle cx="8" cy="4" r="7" fill="#16246e" /><circle cx="-6" cy="4" r="7" fill="#fff" /><circle cx="1" cy="-7" r="7" fill="#6a80f4" stroke="#000" strokeWidth="1.5" /></> },
  { d: <><g stroke="#000" strokeWidth="2"><circle cx="1" cy="-8" r="7" fill="#6a80f4" /><circle cx="-9" cy="8" r="7" fill="#fff" /><circle cx="11" cy="8" r="7" fill="#16246e" /></g></> },
  { d: <><path d="M-20 -8C0 -16 14 0 11 20" fill="none" stroke="#000" strokeWidth="3.6" /><H x={-9} y={-10} /><H x={11} y={10} /></> },
  { m: true, d: <><path d="M-20 -9C0 -14 14 4 10 20" fill="none" stroke="#000" strokeWidth="3.6" /><path d="M-20 -17H-8M2 -11L18 3M18 10V20" stroke="#000" strokeWidth="1.8" strokeDasharray="3 3" /><H x={-5} y={-18} /><H x={19} y={6} /></> },
  { d: <><path d="M-16 -20L17 -12V-4L12 -8L6 -9V14L12 19H-10L-4 14V-12L-10 -13L-16 -7Z" fill="#4a62e0" stroke="#000" strokeWidth="2" /><path d="M-15 -19L16 -12L13 -9L-14 -15Z" fill="#bcc8fb" /></> },
  { m: true, d: <><rect x="-17" y="6" width="12" height="12" fill="#e9e9e9" stroke="#000" strokeWidth="2" /><rect x="8" y="-18" width="12" height="12" fill="#8296f6" stroke="#000" strokeWidth="2" /><path d="M-3 6L7 -3M0 -4H7V3" {...line} /></> },
  { d: <><g fill="#8296f6" stroke="#000" strokeWidth="2"><rect x="-16" y="-18" width="12" height="12" /><rect x="8" y="-12" width="12" height="12" /><rect x="0" y="-6" width="12" height="12" /><rect x="8" y="10" width="12" height="12" /><rect x="-16" y="6" width="12" height="12" fill="#e9e9e9" /></g></> },
  { d: <><rect x="-20" y="-18" width="11" height="28" fill="url(#paper)" stroke="#000" strokeWidth="2" /><path d="M-8 -14C0 -14 4 -10 8 -6M8 -12V-5L0 -6" {...line} /><path d="M-5 13L15 -7L22 -1L2 18Z" fill="#8296f6" stroke="#000" strokeWidth="2" /></> },
  { m: true, d: <><path d="M-16 -9L-2 -19L18 -13V11L4 18L-16 12Z" fill="#6a80f4" stroke="#000" strokeWidth="2" /><path d="M-16 -9L-2 -19L18 -13L4 -3Z" fill="#bcc8fb" /><path d="M4 -3L18 -13V6L4 14Z" fill="#3f55e0" /><path d="M-5 5L4 8L10 5V14L4 18L-5 15Z" fill="#fff" stroke="#000" strokeWidth="1.5" /></> },
  { m: true, d: <><path d="M-20 12L-8 4H22L12 12Z" fill="#6a80f4" stroke="#000" strokeWidth="2.4" /><path d="M-11 8V-12M1 8V-12M13 8V-12" stroke="#fff" strokeWidth="4" /><path d="M-15 -10L-11 -18L-7 -10ZM-3 -10L1 -18L5 -10ZM9 -10L13 -18L17 -10Z" fill="#fff" /></> },
  { m: true, d: <g stroke="#000" strokeWidth="2">{[-18, -4, 10].map((x, i) => [-18, -5, 9].map((y, j) => <rect key={`${x}${y}`} x={x} y={y} width="8.5" height="8" fill={j === 2 ? (i ? '#6a80f4' : '#fff') : '#a6b6fb'} />))}</g> },
  { m: true, d: <><g fill="url(#paper)" stroke="#000" strokeWidth="2"><rect x="-8" y="-18" width="18" height="10" /><rect x="-4" y="-5" width="10" height="8" /><rect x="-7" y="7" width="14" height="12" /></g><path d="M1 -21V22" stroke="#d03a2c" strokeOpacity=".85" strokeWidth="4" /></> },
];

const ToolIcon = ({ g }: { g: Glyph }) => (
  <svg width="60" height="60" viewBox="-29 -30 60 60">{g.d}{g.m && <MenuMark />}</svg>
);

const UpDown = ({ w = 12 }: { w?: number }) => (
  <svg width={w} height={w * 1.5} viewBox="0 0 12 18"><path d="M2 6.500L6 2L10 6.500M2 11.500L6 16L10 11.500" fill="none" stroke="#454545" strokeWidth="2" strokeLinecap="round" strokeLinejoin="round" /></svg>
);

const SideIcon = ({ right }: { right?: boolean }) => (
  <svg width="39" height="40" viewBox="0 0 39 40">
    <rect x="1" y="1.5" width="37" height="37" fill="#fff" stroke="#2f6eeb" strokeWidth="2.4" />
    <rect x={right ? 26 : 0} y="1" width="13" height="38" fill="#2f6eeb" />
  </svg>
);

/* ---------- left column ---------- */

const LeftColumn = styled.aside`
  width: 322px;
  flex: none;
  display: flex;
  flex-direction: column;
  border-right: 2px solid #858585;
`;
const LeftHeader = styled.div`
  height: 52px;
  flex: none;
  background: linear-gradient(#f8f8f8, #e2e2e2);
  border-bottom: 2px solid #cfcfcf;
`;
const CommandBox = styled.div`
  width: 286px;
  height: 40px;
  flex: none;
  margin: 21px 0 17px 17px;
  padding-left: 7px;
  background: #fff;
  border: 1px solid #dedede;
  border-bottom: 2px solid #c0c0c0;
  font-size: 25px;
  line-height: 38px;
  color: #bdbdbd;
  font-weight: 500;
  letter-spacing: 0.2px;
`;
const PaletteArea = styled.div`
  display: flex;
  height: 489px;
  flex: none;
  border-bottom: 3px solid #7f7f7f;
`;
const IconGrid = styled.div`
  width: 290px;
  display: grid;
  grid-template-columns: repeat(4, 60px);
  grid-auto-rows: 60px;
  overflow: hidden;
`;
const Track = styled.div`
  flex: 1;
  background: #fbfbfb;
  border-left: 2px solid #e4e4e4;
  padding: 6px 0 0 6px;
`;
const Thumb = styled.div<{ $w: number; $h: number }>`
  width: ${(p) => p.$w}px;
  height: ${(p) => p.$h}px;
  border-radius: 8px;
  background: #c1c1c1;
`;
const SnapArea = styled.div`
  display: flex;
  height: 554px;
  flex: none;
  overflow: hidden;
`;
const SnapList = styled.div`
  width: 290px;
  padding: 11px 0 0 36px;
  border-bottom: 2px solid #e2e2e2;
`;
const SnapModes = styled.div`
  padding-bottom: 6px;
`;
const HTrack = styled.div`
  flex: 1;
  background: #fbfbfb;
  padding: 7px 0 0 6px;
`;
const CheckRow = styled.label<{ $h: number; $indent?: number; $dim?: boolean }>`
  display: flex;
  align-items: center;
  height: ${(p) => p.$h}px;
  margin-left: ${(p) => p.$indent ?? 0}px;
  gap: 8px;
  font-size: 22.2px;
  font-weight: 450;
  letter-spacing: -0.3px;
  white-space: nowrap;
  color: ${(p) => (p.$dim ? '#b9b9b9' : '#262626')};
`;
const Box = styled.i<{ $on?: boolean; $dim?: boolean }>`
  display: grid;
  place-items: center;
  width: 24px;
  height: 24px;
  flex: none;
  border-radius: 5px;
  background: ${(p) => (p.$on ? 'linear-gradient(#4b93f8, #2f71f2)' : p.$dim ? '#f8f8f8' : '#fff')};
  border: ${(p) => (p.$on ? 'none' : p.$dim ? '1px solid #e3e3e3' : '1px solid #cdcdcd')};
  box-shadow: ${(p) => (p.$on || p.$dim ? 'none' : 'inset 0 1px 2px rgba(0,0,0,.12)')};
`;
const Dot = styled.i<{ $on?: boolean }>`
  width: 24px;
  height: 24px;
  flex: none;
  border-radius: 50%;
  background: ${(p) => (p.$on ? 'radial-gradient(circle, #fff 0 4.5px, transparent 5.5px), linear-gradient(#4b93f8, #2f71f2)' : '#fff')};
  border: ${(p) => (p.$on ? 'none' : '1px solid #cbcbcb')};
  box-shadow: ${(p) => (p.$on ? 'none' : 'inset 0 1px 2px rgba(0,0,0,.15)')};
`;
const Check = ({ on, dim }: { on?: boolean; dim?: boolean }) => (
  <Box $on={on} $dim={dim}>
    {on && <svg width="16" height="18" viewBox="0 0 16 18"><path d="M2 9.500L6.500 15L14 3" fill="none" stroke="#fff" strokeWidth="3" strokeLinecap="round" strokeLinejoin="round" /></svg>}
  </Box>
);

const SNAPS: [string, boolean][] = [
  ['End', true], ['Near', true], ['Point', false], ['Midpoint', true], ['Center', false],
  ['Intersection', false], ['Perpendicular', false], ['Tangent', false], ['Quadrant', false],
  ['Knot', false], ['Vertex', false],
];

/* ---------- viewport ---------- */

const CenterColumn = styled.div`
  width: 1798px;
  flex: none;
  display: flex;
  flex-direction: column;
`;
const ViewTabs = styled.div`
  display: flex;
  align-items: center;
  height: 52px;
  flex: none;
  padding: 0 0 7px 19px;
  background: linear-gradient(#fafafa, #e8e8e8);
  border-bottom: 2px solid #7b7b7b;
  font-size: 25.3px;
`;
const ViewTab = styled.span<{ $w: number; $on?: boolean }>`
  width: ${(p) => p.$w}px;
  white-space: nowrap;
  color: ${(p) => (p.$on ? '#3576ea' : '#666')};
`;
const TabRule = styled.i`
  width: 2px;
  height: 27px;
  margin-right: 37px;
  background: #6f6f6f;
`;
const Viewport = styled.div`
  position: relative;
  flex: 1;
  min-height: 0;
  background: ${SCENE};
  overflow: hidden;
`;
const ViewLabel = styled.div`
  position: absolute;
  left: 2px;
  top: 2px;
  width: 160px;
  height: 38px;
  padding-right: 4px;
  background: #1f5392;
  color: #fff;
  text-align: center;
  font: 700 24px/37px "Open Sans", "Noto Sans", sans-serif;
`;

type P3 = [number, number, number];
type Lite = { c: P3; ink: string; fill: string; shards: [string, string][]; ring?: number };

function Lites({ items, dx, id }: { items: Lite[]; dx: number; id: string }) {
  return (
    <>
      {items.map(({ c: [x, y, r], ink, fill, shards, ring }, i) => (
        <g key={i}>
          <circle cx={x + dx} cy={y + 13} r={r + 4} fill="#101010" stroke="#1d4d1d" strokeWidth="2" />
          <circle cx={x + dx / 2} cy={y + 6} r={r + 4} fill="#0c0c0c" stroke="#000" strokeWidth="3" />
          <clipPath id={`${id}${i}`}><circle cx={x} cy={y} r={ring ? r - ring : r} /></clipPath>
          <g clipPath={`url(#${id}${i})`}>
            <rect x={x - r} y={y - r} width={2 * r} height={2 * r} fill={fill} />
            {shards.map(([d, f], k) => <path key={k} d={d} fill={f} />)}
            <path d={`M${x - r} ${y}H${x + r}`} stroke={i % 3 ? ink : '#111'} strokeWidth="3" />
            <path d={`M${x} ${y - r}V${y + r}`} stroke={i % 2 ? ink : '#111'} strokeWidth="3" />
            <path d={`M${x - r} ${y + 10}H${x}M${x + 10} ${y - r}V${y}`} stroke="#000" strokeOpacity=".35" strokeWidth="2" />
          </g>
          {ring && <circle cx={x} cy={y} r={r - ring} fill="none" stroke="#000" strokeWidth="6" />}
          <circle cx={x} cy={y} r={r} fill="none" stroke={ink} strokeWidth="6" />
          <circle cx={x} cy={y} r={r + 5} fill="none" stroke="#000" strokeWidth="3" />
        </g>
      ))}
    </>
  );
}

function Plate({ cx, cy, r, holes, lites, dx, id, tx, seam }: {
  cx: number; cy: number; r: number; holes: P3[]; lites: Lite[]; dx: number; id: string; tx: number; seam: number;
}) {
  return (
    <g transform={`translate(${tx} 490) scale(.33333)`}>
      <ellipse cx={cx} cy={cy} rx={r} ry={r - 5} fill="#1b1b1b" stroke="#000" strokeWidth="7" />
      <circle cx={cx + dx / 2} cy={cy + 8} r={r - 17} fill="none" stroke="#000" strokeWidth="3" />
      <circle cx={cx + dx / 2} cy={cy + 10} r={r - 24} fill="none" stroke="#2c2c2c" strokeWidth="1.5" />
      <path d={`M${cx - r} ${cy - 4}H${cx + r}M${cx - r} ${cy + 4}H${cx + r}M${seam} ${cy - r + 8}V${cy + r - 8}M${seam + (dx ? 12 : 2)} ${cy - r + 8}V${cy + r - 8}`} stroke="#000" strokeWidth="3.5" />
      <circle cx={seam} cy={cy - 2} r="9" fill="#000" />
      {holes.map(([x, y, q]) => (
        <g key={`${x}-${y}`}>
          <circle cx={x + dx / 2} cy={y + 2} r={q + 10} fill="#111" stroke="#000" strokeWidth="4" />
          <circle cx={x - dx / 4} cy={y - 3} r={q + 7} fill="#191919" stroke="#000" strokeWidth="3" />
          <circle cx={x} cy={y + 2} r={q + 1} fill={SCENE} stroke="#000" strokeWidth="3" />
        </g>
      ))}
      <Lites items={lites} dx={dx} id={id} />
    </g>
  );
}

const HOLES_A: P3[] = [
  [705, 173, 45], [560, 298, 80], [720, 362, 45], [1060, 293, 46], [283, 436, 45], [463, 438, 45], [880, 442, 45],
  [243, 556, 45], [1265, 610, 46], [360, 690, 45], [518, 724, 80], [922, 690, 82], [1263, 742, 46], [625, 898, 81],
  [807, 850, 46], [1206, 886, 84], [407, 1134, 46], [523, 1196, 46], [908, 1125, 84],
];
const HOLES_B: P3[] = [
  [742, 171, 46], [383, 287, 47], [721, 357, 47], [884, 295, 80], [561, 438, 46], [977, 437, 47], [1157, 436, 48],
  [171, 601, 48], [1193, 556, 48], [512, 685, 80], [1075, 690, 47], [915, 725, 80], [171, 735, 48], [222, 880, 81],
  [622, 847, 48], [803, 895, 81], [1017, 1133, 48], [512, 1120, 81], [898, 1193, 48],
];

const LITES_A: Lite[] = [
  { c: [380, 319, 62], ink: '#fbf33c', fill: '#4a4a34', ring: 10, shards: [['M330 290L360 265L440 290V340L400 370Z', '#c4c3a2'], ['M340 345L375 340L400 375H350Z', '#8f8f2a']] },
  { c: [874, 257, 100], ink: '#fbf33c', fill: '#47462a', shards: [['M770 250L840 205L850 310L870 320L850 360Q780 330 770 250Z', '#87852c'], ['M845 160H862V310H850Z', '#a3a135'], ['M840 320L920 305L970 310L920 370H860Z', '#a3a135'], ['M905 165L930 172L915 195Z', '#b9b8ae']] },
  { c: [618, 527, 101], ink: '#ff3f66', fill: '#4a252e', shards: [['M575 615L625 520L690 450L680 470L650 530L665 550L650 620L600 635Z', '#a7969a'], ['M575 615L625 520L632 535L595 630Z', '#a33a50']] },
  { c: [1080, 496, 138], ink: '#37ef33', fill: '#24491d', shards: [['M950 440L1000 360H1200L1225 500L1210 560L1090 375V400L1110 450V600L1180 595L1140 640H1040L1070 510L1055 400L980 435Z', '#2fa41c'], ['M1090 375L1150 400L1185 430L1220 560L1200 555Z', '#5cd043'], ['M945 470L985 430L1000 520L1040 600L1080 590V640L990 620L930 520Z', '#a0a59b'], ['M1160 400L1190 420L1225 470L1205 550L1180 480Z', '#9fb09a'], ['M990 430L1050 405L1065 500L1075 590L1040 580L1005 520Z', '#24491d']] },
  { c: [385, 556, 62], ink: '#37ef33', fill: '#39433a', ring: 10, shards: [['M355 515L385 500V610H350Z', '#2fa41c'], ['M335 540L355 520L350 600Z', '#a5aaa2'], ['M400 515H420L405 545Z', '#b0b3ae']] },
  { c: [806, 558, 56], ink: '#3ce6f0', fill: '#1e4c50', shards: [['M760 520L775 580L800 605L770 600Z', '#9aa6a8'], ['M775 510L800 515L790 600H780Z', '#2a8f97'], ['M840 560L862 540V590L830 610Z', '#a7b3b5'], ['M830 515L850 530L830 600Z', '#2a8f97']] },
  { c: [217, 703, 57], ink: '#fb2b7d', fill: '#a3255b', shards: [['M165 690H275V702H165Z', '#c5638e'], ['M190 655L240 660V690L180 690Z', '#5b1c37'], ['M165 720L230 712H275V722Z', '#4a1a30'], ['M190 740L240 728L265 735L230 760Z', '#c5638e']] },
  { c: [343, 920, 138], ink: '#fbf33c', fill: '#4b4a22', shards: [['M205 950L270 910L360 865L400 850L435 850L425 1000L400 1040L300 1060L220 1000Z', '#a9a890'], ['M325 915L425 930L400 1050H320Z', '#c9c84a'], ['M205 955L270 925L240 1010Z', '#97962f'], ['M360 860L410 805L390 860Z', '#8a8a70']] },
  { c: [1100, 732, 62], ink: '#fbf33c', fill: '#8c8b2c', ring: 10, shards: [['M1050 720L1090 690L1100 740L1120 780H1080Z', '#b3b19c'], ['M1060 690L1150 700V730L1080 715Z', '#45442a'], ['M1105 730H1150V770L1110 765Z', '#a9a735']] },
  { c: [982, 908, 102], ink: '#3fd5f2', fill: '#a1acac', shards: [['M930 815H1080V940L1040 970L1010 940L1005 890L960 860Z', '#27464e'], ['M1010 900L1060 970L1030 1000Z', '#5ab7c8'], ['M1060 850L1080 900L1070 950Z', '#3c8a9a']] },
  { c: [790, 983, 63], ink: '#fb2376', fill: '#cf94ae', ring: 10, shards: [['M760 940L790 930L785 1030L755 1020Z', '#a3255b'], ['M740 1000L760 980L770 1030Z', '#b9aab0'], ['M820 940L845 980L830 1000Z', '#7a1f45']] },
  { c: [534, 1046, 63], ink: '#2fe9ee', fill: '#2f9fa0', ring: 10, shards: [['M490 1030L530 1000L550 1000L540 1090L510 1090Z', '#b5bcbd'], ['M490 1030L520 1005L525 1020L500 1050Z', '#30302f'], ['M545 1000L585 1030L540 1060Z', '#2a8488']] },
  { c: [694, 1178, 103], ink: '#43f04a', fill: '#9dab9c', shards: [['M600 1150L640 1090L700 1078L670 1110L640 1135L610 1165Z', '#66d264'], ['M600 1195L700 1175L790 1160V1190L750 1195L690 1182L620 1205Z', '#2e4a2c'], ['M750 1190L795 1190L770 1230Z', '#3f5a3c'], ['M745 1240L770 1220L750 1260Z', '#58c758']] },
  { c: [1079, 1077, 62], ink: '#37ef33', fill: '#414b3f', ring: 10, shards: [['M1035 1095L1080 1120L1060 1130Z', '#a9ada6'], ['M1040 1070H1130V1080H1040Z', '#2d332c']] },
];

const LITES_B: Lite[] = [
  { c: [564, 251, 102], ink: '#ff3c55', fill: '#c55662', shards: [['M515 165H548L560 248L540 235L525 200Z', '#a02c3a'], ['M590 175L620 170L655 210L650 240L630 250L620 215Z', '#a39a9c'], ['M560 320L620 325L600 345H560Z', '#a59c9f']] },
  { c: [1056, 318, 57], ink: '#ff2f75', fill: '#a59da2', shards: [['M1060 275L1085 270L1110 305L1080 325L1060 305Z', '#5a2338'], ['M1010 330L1040 340L1050 365Z', '#c9507c']] },
  { c: [352, 488, 137], ink: '#27b4f0', fill: '#1f7fab', shards: [['M235 400L350 345L440 385L490 470L460 470L400 420L310 430Z', '#9aa7ad'], ['M310 400L350 360L395 380L400 435L370 425L320 430Z', '#1f3642'], ['M210 460L270 450L290 520L320 595L240 570Z', '#1d3a4a'], ['M235 420L285 380V430L225 450Z', '#48a2cb'], ['M285 455L350 560L440 590L380 625L320 610Z', '#48a2cb'], ['M295 460L345 600L320 600Z', '#93abb7'], ['M455 470L490 480L480 540L460 530Z', '#1d3a4a']] },
  { c: [625, 553, 57], ink: '#37ef33', fill: '#97a093', shards: [['M570 540L600 505V600H580Z', '#2e4a2c'], ['M597 505L620 598H600Z', '#43cf3c'], ['M645 510L670 540L650 550Z', '#62d35c']] },
  { c: [812, 523, 102], ink: '#fbf33c', fill: '#bfbe55', shards: [['M710 470L750 430L810 425V500L765 560V620L710 560Z', '#a6a594'], ['M750 455L830 610L800 600L770 560Z', '#47472a'], ['M765 520L780 590L770 600Z', '#47472a'], ['M830 540L870 580L840 615Z', '#9a992f'], ['M810 425L830 490L810 510Z', '#a9a89a']] },
  { c: [1045, 556, 57], ink: '#2ef0e8', fill: '#27a29b', shards: [['M1000 530L1040 505V600L1010 590Z', '#3fbab4'], ['M1000 520L1020 510L1030 600Z', '#8aa9a8'], ['M1070 515L1095 540L1060 560Z', '#66b8b5']] },
  { c: [325, 724, 57], ink: '#ff2f75', fill: '#c0466f', shards: [['M270 720L300 675L370 690L300 715L270 740Z', '#a59aa0'], ['M300 705H380V725L340 735L310 720Z', '#5a2338'], ['M330 740L375 735L350 750Z', '#8a2c4d']] },
  { c: [1208, 704, 57], ink: '#fbf33c', fill: '#a5a497', shards: [['M1160 690L1190 655H1205L1200 740H1165Z', '#8a892a'], ['M1165 690L1200 660L1185 700Z', '#47472a'], ['M1200 720L1230 745L1190 755Z', '#b5b44a']] },
  { c: [440, 901, 102], ink: '#3dee3a', fill: '#9ba79a', shards: [['M345 890L380 850L370 920H350Z', '#62d35c'], ['M385 885L400 870H470L475 990L420 1000L390 950Z', '#2b4c29'], ['M395 820L420 805L465 815V830Z', '#2b4c29'], ['M480 960L535 870V930L470 1000Z', '#43a53c'], ['M500 910L530 865V900Z', '#2b4c29']] },
  { c: [1078, 920, 138], ink: '#ff2757', fill: '#c9536f', shards: [['M930 920L960 830H985L1025 1030L960 1010Z', '#4f2430'], ['M978 830L1000 810L1035 1015L1020 1010Z', '#a99ca1'], ['M1055 780L1130 810L1200 990L1140 1035L1110 980L1090 860Z', '#ab9da3'], ['M1140 840L1175 830L1215 920L1205 980Z', '#cf5372'], ['M1170 830L1215 900L1190 870Z', '#8f2440'], ['M1020 1020L1110 1030L1120 1045H1050Z', '#5c2534']] },
  { c: [629, 978, 57], ink: '#f3ee3a', fill: '#a7a596', shards: [['M575 960L610 925L680 950L640 975L600 990Z', '#bab94d'], ['M585 980L600 940L620 1030L590 1010Z', '#67662a'], ['M635 975L660 955V1000L630 1030Z', '#99988a'], ['M615 990H640L620 1030Z', '#aaa93a']] },
  { c: [884, 1043, 57], ink: '#33e82e', fill: '#9ba79a', shards: [['M820 1040L835 985H930L945 1045L905 1090L890 1050L880 1095L865 1050L855 1075L840 1050Z', '#244d20'], ['M905 1045L935 1045L920 1080Z', '#379f33']] },
  { c: [338, 1069, 57], ink: '#2ff5e6', fill: '#49cfc5', shards: [['M290 1050L315 1020L335 1080L310 1110Z', '#94b3b2'], ['M340 1080L380 1070L385 1090L350 1120Z', '#2f968f'], ['M345 1015L380 1050L340 1060Z', '#63d6cd']] },
  { c: [720, 1172, 108], ink: '#27c6f2', fill: '#3f94ab', ring: 11, shards: [['M660 1110L690 1080L720 1085L725 1180L660 1150Z', '#b3bcc0'], ['M720 1085L750 1100L770 1180L760 1260L720 1275Z', '#a8c6cf'], ['M630 1160L700 1150L720 1180L705 1270L660 1240Z', '#46525a'], ['M650 1190H705V1270L660 1230Z', '#38444b']] },
];

const OUTLINE_C: P3[] = [
  [795, 1036.3, 18], [746.3, 1078.7, 30.3], [914.4, 1077.7, 18], [800.6, 1100, 18], [653.1, 1125.7, 18], [714.4, 1126.3, 18],
  [853.8, 1128.3, 18], [640, 1166.3, 18], [983.1, 1185.3, 18], [678.8, 1212.3, 18], [732.5, 1224.7, 30.4], [868.1, 1212.7, 30.4],
  [982.5, 1230.7, 18], [768.8, 1283, 30.4], [830, 1267, 18.2], [964.4, 1280.7, 30.4], [695, 1364, 18.3], [733.8, 1385, 18.4],
  [863.8, 1361, 30.6], [805, 1218.3, 2.8], [805.3, 1219.3, 205.4],
];
const DOUBLE_C: P3[] = [
  [688.8, 1087.7, 18.2], [854.4, 1066.3, 33.2], [768.8, 1158, 33.5], [923.1, 1147.3, 45.4], [690, 1168.3, 18.3], [831.3, 1168.7, 18.3],
  [634.4, 1218, 18.4], [676.9, 1292, 45.8], [929.4, 1227.7, 18.4], [890, 1288, 33.5], [825.6, 1313, 18.5], [740, 1334.7, 18.5],
  [793.8, 1379.3, 33.8], [922.5, 1345.3, 18.5],
];
const OUTLINE_D: P3[] = [
  [1338.8, 1034.7, 18], [1218.8, 1075, 18], [1386.9, 1077.3, 30.3], [1331.9, 1098.3, 18], [1278.1, 1126, 18], [1417.5, 1125.7, 18],
  [1478.1, 1125.7, 18], [1490.6, 1166.3, 18], [1146.9, 1181.3, 18], [1261.3, 1210.3, 30.4], [1396.9, 1223.7, 30.4], [1450.6, 1212, 18],
  [1146.9, 1227.3, 18], [1163.8, 1277, 30.4], [1298.8, 1265, 18.2], [1359.4, 1282, 30.4], [1261.9, 1359, 30.6], [1430.6, 1363.3, 18.3],
  [1391.3, 1384, 18.3], [1324.7, 1216.7, 2.8], [1325, 1217.8, 205.5],
];
const DOUBLE_D: P3[] = [
  [1279.4, 1064.7, 33.3], [1444.4, 1087.3, 18.2], [1208.1, 1144.3, 45.5], [1299.4, 1166.7, 18.3], [1362.5, 1156.3, 33.4],
  [1440.6, 1167.7, 18.3], [1199.4, 1224.7, 18.4], [1495, 1218.3, 18.4], [1237.5, 1285, 33.6], [1451.3, 1291.7, 45.8],
  [1301.3, 1311, 18.5], [1203.1, 1342.3, 18.5], [1386.3, 1333.7, 18.5], [1331.3, 1377.7, 33.8],
];

const Outlines = ({ plain, double }: { plain: P3[]; double: P3[] }) => (
  <g fill="none" strokeWidth="1.1">
    {plain.map(([x, y, r]) => <circle key={`${x}${y}`} cx={x} cy={y} r={r} stroke="#111" />)}
    {double.map(([x, y, r]) => (
      <g key={`${x}${y}`}>
        <circle cx={x} cy={y} r={r + 2.9} stroke="#1fea14" strokeWidth="1.2" />
        <circle cx={x} cy={y} r={r} stroke="#f4161c" strokeWidth="1.3" />
      </g>
    ))}
  </g>
);

const FiveCircles = ({ x, y, c, box }: { x: number; y: number; c: string; box: string }) => (
  <g transform={`translate(${x} ${y})`} stroke={c}>
    <path d="M0 0L431 -1L441 430L7 432Z" stroke={box} />
    <circle cx="67" cy="73" r="63" /><circle cx="250" cy="79" r="63" /><circle cx="358" cy="181" r="63.5" />
    <circle cx="359" cy="355" r="63.5" /><circle cx="161" cy="270" r="144.5" />
  </g>
);

function Scene() {
  return (
    <svg width="1798" height="1150" viewBox="418 382 1798 1150">
      <Plate id="pa" tx={600} cx={730} cy={708.5} r={614} holes={HOLES_A} lites={LITES_A} dx={18} seam={727} />
      <Plate id="pb" tx={1090} cx={700} cy={705} r={611} holes={HOLES_B} lites={LITES_B} dx={0} seam={699} />
      <Outlines plain={OUTLINE_C} double={DOUBLE_C} />
      <Outlines plain={OUTLINE_D} double={DOUBLE_D} />
      <g transform="translate(1670 710) scale(.33333)" fill="none" strokeWidth="3.4">
        <g stroke="#19ee12">
          <path d="M85 79L514 77L521 505L91 504ZM88 292H517" />
          <circle cx="197" cy="391" r="98.5" /><circle cx="409" cy="390" r="98.5" />
        </g>
        <g stroke="#f31bd0"><circle cx="194" cy="187" r="98.5" /><circle cx="404" cy="187" r="98.5" /></g>
        <path d="M598 76L1028 75L1039 502L607 504Z" stroke="#0fe9f2" />
        <path d="M602 84L1027 82L1031 290L603 292Z" stroke="#35e42a" />
        <g stroke="#1be6ef"><circle cx="709" cy="185" r="98.5" /><circle cx="919" cy="185" r="98.5" /></g>
        <g stroke="#dfee1c"><circle cx="713" cy="390" r="98.5" /><circle cx="919" cy="390" r="98.5" /></g>
        <FiveCircles x={102} y={575} c="#15e9f0" box="#0fe9f2" />
        <FiveCircles x={610} y={577} c="#f0ee1c" box="#222" />
        <FiveCircles x={109} y={1052} c="#f414b4" box="#f414b4" />
        <FiveCircles x={619} y={1050} c="#25ee18" box="#222" />
      </g>
      <path d="M430 1460H490M490 1456V1520" stroke="#6e7278" strokeWidth="1.6" fill="none" />
      <g fontFamily='"Noto Sans", sans-serif' fontSize="26" fill="#5f6369">
        <text x="435" y="1461">x</text><text x="495.5" y="1457">z</text><text x="495.5" y="1517">y</text>
      </g>
    </svg>
  );
}

/* ---------- right column ---------- */

const RightColumn = styled.aside`
  flex: 1;
  display: flex;
  flex-direction: column;
  border-left: 2px solid #858585;
  min-width: 0;
`;
const PanelHead = styled.div<{ $h: number }>`
  display: grid;
  grid-template-columns: 60px 1fr 60px;
  grid-template-rows: 48px 1fr;
  height: ${(p) => p.$h}px;
  flex: none;
  background: linear-gradient(#f9f9f9, #dedede);
`;
const PanelTitle = styled.div`
  grid-column: 2;
  text-align: center;
  line-height: 49px;
  padding-right: 36px;
  font-size: 22.3px;
  letter-spacing: -0.75px;
  font-weight: 450;
`;
const GearButton = styled.div<{ $flat?: boolean }>`
  display: flex;
  align-items: center;
  justify-content: center;
  gap: ${(p) => (p.$flat ? 10 : 4)}px;
  width: ${(p) => (p.$flat ? 64 : 56)}px;
  height: 33px;
  border-radius: 8px;
  ${(p) => p.$flat
    ? css`background: #fff; box-shadow: 0 1px 3px rgba(0,0,0,.35);`
    : css`margin-top: 8px; border: 2px solid #a8a8a8; background: #f4f4f4;`}
`;
const PanelIcons = styled.div`
  grid-column: 1 / 4;
`;
const PropsArea = styled.div`
  display: flex;
  height: 485px;
  flex: none;
  border-bottom: 3px solid #7f7f7f;
  overflow: hidden;
`;
const Form = styled.div`
  width: 568px;
  padding: 18px 15px 0 16px;
`;
const FormRow = styled.div<{ $h: number; $pl: number }>`
  display: flex;
  align-items: center;
  height: ${(p) => p.$h}px;
  padding-left: ${(p) => p.$pl}px;
  white-space: nowrap;
  font-size: 22.3px;
  font-weight: 450;
  letter-spacing: -0.2px;
  font-feature-settings: "calt" 0;
`;
const FieldLabel = styled.span`
  width: 70px;
`;
const TextField = styled.span`
  width: 401px;
  height: 35px;
  padding-left: 6px;
  line-height: 33px;
  background: #fff;
  border: 1px solid #dedede;
  border-bottom: 2px solid #bcbcbc;
`;
const Rule = styled.hr<{ $t: number; $b: number }>`
  height: 2px;
  margin: ${(p) => p.$t}px 0 ${(p) => p.$b}px;
  border: 0;
  background: #dbdbdb;
`;
const Radios = styled.div`
  padding: 4px 0 0 42px;
`;
const Spread = styled.span`
  display: flex;
  align-items: center;
  justify-content: space-between;
  width: 187px;
`;

const LayerTable = styled.div`
  flex: 1;
  background: #fff;
  display: flex;
  flex-direction: column;
`;
const LAYER_COLS = '114px 46px 46px 46px 60px 48px 114px 46px 58px';
const LayerHead = styled.div`
  display: grid;
  grid-template-columns: ${LAYER_COLS};
  height: 54px;
  padding-top: 11px;
  border-bottom: 2px solid #e0e0e0;
  margin-bottom: 10px;
  font-size: 22.2px;
  font-weight: 450;
  span { height: 32px; line-height: 32px; border-right: 2px solid #dedede; padding-left: 10px; }
  span:first-child { padding-left: 58px; }
`;
const LayerRow = styled.div`
  display: grid;
  grid-template-columns: 122px 45px 45px 53px 48px 53px 87px 26px 48px 22px 20px;
  align-items: center;
  height: 34px;
  padding-left: 2px;
  font-size: 22px;
  font-weight: 450;
  letter-spacing: -0.4px;
  > :first-child { padding-left: 52px; }
`;
const Swatch = styled.i<{ $c: string }>`
  width: 28px;
  height: 28px;
  background: ${(p) => p.$c};
`;
const Ring = styled.i`
  width: 28px;
  height: 28px;
  border: 2px solid #111;
  border-radius: 50%;
`;
const LayerFoot = styled.div`
  display: flex;
  align-items: center;
  height: 64px;
  flex: none;
  padding-left: 36px;
  gap: 32px;
  border-top: 2px solid #dcdcdc;
  background: #f5f5f5;
`;
const AddRemove = styled.div`
  width: 100px;
  height: 32px;
  border: 2px solid #e8e8e8;
  border-radius: 7px;
`;

const Gear = () => (
  <svg width="22" height="22" viewBox="-11 -11 22 22">
    <g fill="#262626">{[0, 45, 90, 135, 180, 225, 270, 315].map((a) => <rect key={a} x="-2" y="-10.5" width="4" height="6" transform={`rotate(${a})`} />)}</g>
    <circle r="5.5" fill="none" stroke="#262626" strokeWidth="4" />
  </svg>
);
const Caret = () => (
  <svg width="12" height="9" viewBox="0 0 12 9"><path d="M2 2L6 6.500L10 2" fill="none" stroke="#262626" strokeWidth="2.8" strokeLinecap="round" /></svg>
);

const Lamp = ({ dim }: { dim?: boolean }) => (
  <svg width="26" height="30" viewBox="0 0 26 30" opacity={dim ? 0.4 : 1}>
    <path d="M8 20C6 15 .5 14 .5 8.500C.5 3 6 .5 13 .5S25.500 3 25.500 8.500C25.500 14 20 15 18 20Z" fill="url(#lampg)" />
    <ellipse cx="13" cy="7" rx="8" ry="3" fill="#fff6b8" opacity=".8" />
    <path d="M9 20H17V26L15 29H11L9 26Z" fill="#c3ccd4" /><path d="M9 23H17M10 26H16" stroke="#79838c" />
  </svg>
);
const Padlock = ({ dim }: { dim?: boolean }) => (
  <svg width="28" height="30" viewBox="0 0 28 30" opacity={dim ? 0.35 : 1}>
    <path d="M15 15V8C15 1 26 1 26 8V12" fill="none" stroke="#a0a0a0" strokeWidth="3.2" />
    <rect x="1" y="14" width="20" height="14" rx="2" fill="url(#lockg)" /><path d="M1 19H21M1 23H21" stroke="#7c4a10" strokeWidth=".9" />
  </svg>
);

const LAYERS: [string, string][] = [
  ['De...', '#000'], ['La...', '#c33418'], ['La...', '#8747ce'], ['La...', '#1430f5'], ['La...', '#378c24'], ['La...', '#fff'],
];

function RightPanels() {
  const ic = { fill: 'none', stroke: '#7e7e7e', strokeWidth: 2 } as const;
  return (
    <RightColumn>
      <PanelHead $h={118}>
        <PanelTitle>Properties: Viewport</PanelTitle>
        <GearButton><Gear /><Caret /></GearButton>
        <PanelIcons>
          <svg width="598" height="68" viewBox="2218 378 598 68">
            <g fill="none" stroke="#3b7cf0" strokeWidth="2">
              <path d="M2429 395H2440L2443 389H2457L2460 395H2471V420H2429Z" />
              <circle cx="2450" cy="408" r="12.5" /><circle cx="2450" cy="408" r="9" />
            </g>
            <g {...ic}>
              <rect x="2489" y="387" width="43" height="38" strokeWidth="2.4" />
              <rect x="2493" y="392" width="35" height="28" stroke="#b5b5b5" strokeWidth="1.5" />
              <rect x="2497" y="396" width="26" height="19" stroke="#b5b5b5" />
            </g>
            <circle cx="2582" cy="392" r="7.5" {...ic} strokeWidth="1.5" /><circle cx="2573" cy="403" r="8.5" fill="#e9e9e9" stroke="#7e7e7e" strokeWidth="1.8" />
            <circle cx="2560" cy="414" r="11.5" fill="#e4e4e4" stroke="#7e7e7e" strokeWidth="2.2" />
          </svg>
        </PanelIcons>
      </PanelHead>
      <PropsArea>
        <Form>
          <FormRow $h={35} $pl={40}><FieldLabel>Title:</FieldLabel><TextField>Perspective</TextField></FormRow>
          <FormRow $h={62} $pl={41}><FieldLabel>Size:</FieldLabel>1798 x 1150</FormRow>
          <CheckRow $h={27} $indent={40}><Check />Locked</CheckRow>
          <Rule $t={24} $b={17} />
          <FormRow $h={28} $pl={1}>Projection</FormRow>
          <Radios>
            <CheckRow $h={30}><Dot />Parallel</CheckRow>
            <CheckRow $h={30}><Dot $on />Perspective</CheckRow>
            <CheckRow $h={30}><Dot />Two point perspective</CheckRow>
          </Radios>
          <Rule $t={43} $b={17} />
          <FormRow $h={28} $pl={1}>Wallpaper</FormRow>
          <FormRow $h={59} $pl={50}><Spread>Choose...<UpDown /></Spread></FormRow>
          <CheckRow $h={28} $indent={40} $dim><Check dim />Show wallpaper</CheckRow>
        </Form>
        <Track><Thumb $w={16} $h={191} /></Track>
      </PropsArea>
      <PanelHead $h={118}>
        <PanelTitle>Panels: Layers</PanelTitle>
        <GearButton><Gear /><Caret /></GearButton>
        <PanelIcons>
          <svg width="598" height="70" viewBox="2218 981 598 70">
            <g fill="none" stroke="#3b7cf0" strokeWidth="2">
              <path d="M2308 1003L2330 990L2352 1003L2330 1016Z" /><path d="M2315 1007L2308 1011L2330 1024L2352 1011L2345 1007" />
            </g>
            <g {...ic}>
              <path d="M2368 1004L2390 991L2411 1002M2368 1004L2390 1016L2395 1013M2374 1008L2369 1012L2390 1025L2395 1022" />
              <path d="M2395 1005H2406L2412 1011V1030H2395ZM2406 1005V1011H2412" />
              <path d="M2438 990H2455L2463 997V1024H2438ZM2455 990V997H2463" />
              <path d="M2492 1000L2506 991L2527 997V1018L2512 1029L2492 1022ZM2492 1000L2512 1007L2527 997M2512 1007V1029" />
              <path d="M2557 1020V997C2557 991 2561 991 2564 991H2588C2592 992 2592 998 2590 998H2585V1000M2582 994V1016C2582 1024 2582 1028 2576 1028H2556C2549 1028 2550 1021 2556 1021H2578C2580 1023 2577 1025 2575 1023M2585 998V992" />
              <rect x="2610" y="990" width="40" height="32" rx="2" /><rect x="2613.5" y="993" width="33" height="22" stroke="#999" strokeWidth="1.5" /><path d="M2626 1024L2623 1027H2637L2634 1024" />
              <circle cx="2690" cy="1009" r="19" /><path d="M2682 1003C2682 992 2699 993 2699 1002C2699 1008 2691 1008 2690.500 1016" strokeWidth="2.8" /><path d="M2690.500 1020V1024" strokeWidth="3.6" />
            </g>
          </svg>
        </PanelIcons>
      </PanelHead>
      <LayerTable>
        <LayerHead><span>N...</span><span /><span /><span /><span /><span /><span>Linetype</span><span /><span>...</span></LayerHead>
        {LAYERS.map(([name, c], i) => (
          <LayerRow key={i}>
            <span>{name}</span>
            <Dot $on={i === 0} />
            <Lamp dim={i === 0} />
            <Padlock dim={i === 0} />
            <Swatch $c={c} />
            <Ring />
            <span>Conti...</span>
            <UpDown w={11} />
            <svg width="31" height="31" viewBox="0 0 31 31"><path d="M15.500 .5L30.500 15.500L15.500 30.500L.5 15.500Z" fill={c} />{c === '#fff' && <path d="M17 2L30.500 15.500L17 29" fill="none" stroke="#d5d5d5" />}</svg>
            <span>...</span>
            <UpDown w={11} />
          </LayerRow>
        ))}
      </LayerTable>
      <LayerFoot>
        <AddRemove>
          <svg width="96" height="28" viewBox="0 0 96 28"><path d="M14 12H31M22.500 3.500V20.500" stroke="#6b6b6b" strokeWidth="2" /><path d="M65 12H82" stroke="#b5b5b5" strokeWidth="2" /><path d="M48 4V24" stroke="#dcdcdc" strokeWidth="2" /></svg>
        </AddRemove>
        <GearButton $flat><Gear /><Caret /></GearButton>
      </LayerFoot>
    </RightColumn>
  );
}

function Modeller() {
  return (
    <AppWindow>
      <TitleBar>
        <TitleRow>
          <Lights>
            <Light $c="#ed6a5f" $b="#d5574c" $dot />
            <Light $c="#f4bf4f" $b="#d8a43c" />
            <Light $c="#61c554" $b="#4fab43" />
          </Lights>
          <DocTitle>
            <svg width="24" height="32" viewBox="0 0 24 32"><path d="M1 1H17L23 7V31H1Z" fill="#eee" stroke="#bbb" /><path d="M2 2L14 4L20 12L22 22L16 18L14 20L9 18L3 13Z" fill="#2a2a2a" /><path d="M5 4L12 12L9 16L5 10Z" fill="#999" /><path d="M15 3L20 8L17 9Z" fill="#ddd" /><path d="M7 27H17" stroke="#999" strokeWidth="2" /></svg>
            circlessss.3dm <em>— Edited</em>
          </DocTitle>
        </TitleRow>
        <ModeRow>
          <SideIcon />
          <ModeButton $w={140} $ml={99}>Grid Snap</ModeButton>
          <ModeButton $w={90} $ml={44}>Ortho</ModeButton>
          <ModeButton $w={100} $ml={42}>Planar</ModeButton>
          <ModeButton $w={184} $ml={28} $on>SmartTrack</ModeButton>
          <ModeButton $w={144} $ml={16} $on>Gumball</ModeButton>
          <ModeButton $w={110} $ml={28}>History</ModeButton>
          <FilterGlyphs width="190" height="46" viewBox="1670 174 190 46">
            <g fill="none" stroke="#767676" strokeWidth="1.8">
              <path d="M1687 183C1687 187 1697 199 1700 203V217H1706V203C1709 199 1719 187 1719 183" /><ellipse cx="1703" cy="184" rx="16" ry="3.5" />
              <path d="M1717 177H1724V184M1681 212V219H1688" />
              <circle cx="1775" cy="198" r="17.5" stroke="#a8a8a8" /><rect x="1770" y="194" width="8" height="8" fill="#707070" stroke="none" /><path d="M1776 198H1797" strokeWidth="2.4" />
              <circle cx="1839" cy="199" r="20" strokeWidth="2" /><circle cx="1839" cy="199" r="10.5" strokeWidth="2" />
            </g>
          </FilterGlyphs>
          <LayerField><i /><span>Default</span></LayerField>
          <Spacer />
          <SideIcon right />
        </ModeRow>
      </TitleBar>
      <ToolTabs>
        {TABS.map(([t, w], i) => <ToolTab key={t} $w={w} $on={i === 0}>{t}</ToolTab>)}
      </ToolTabs>
      <ToolRow>{TOOLBAR.map((g, i) => <ToolIcon key={i} g={g} />)}</ToolRow>
      <Body>
        <LeftColumn>
          <LeftHeader />
          <CommandBox>Command</CommandBox>
          <PaletteArea>
            <IconGrid>{PALETTE.map((g, i) => <ToolIcon key={i} g={g} />)}</IconGrid>
            <Track><Thumb $w={16} $h={427} /></Track>
          </PaletteArea>
          <SnapArea>
            <SnapList>
              <SnapModes>
                <CheckRow $h={30}><Dot $on />Persistent</CheckRow>
                <CheckRow $h={30}><Dot />One shot</CheckRow>
              </SnapModes>
              {SNAPS.map(([t, on]) => <CheckRow key={t} $h={40} $indent={4}><Check on={on} />{t}</CheckRow>)}
              <CheckRow $h={40} $indent={4} $dim><Check dim />On curve</CheckRow>
            </SnapList>
            <Track><Thumb $w={16} $h={353} /></Track>
          </SnapArea>
          <HTrack><Thumb $w={212} $h={16} /></HTrack>
        </LeftColumn>
        <CenterColumn>
          <ViewTabs>
            <svg width="163" height="30" viewBox="437 337 163 30">
              <path d="M438.500 339.500H452V350.500H438.500ZM455 339.500H468.500V350.500H455ZM438.500 354.500H452V365.500H438.500ZM455 354.500H468.500V365.500H455Z" fill="#f7f7f7" stroke="#8c8c8c" strokeWidth="1.3" />
              <rect x="503" y="340" width="28" height="25" fill="#ecf1fc" stroke="#6f9af0" strokeWidth="1.8" />
            </svg>
            <ViewTab $w={182} $on>Perspective</ViewTab><TabRule />
            <ViewTab $w={85}>Top</ViewTab><TabRule />
            <ViewTab $w={106}>Front</ViewTab><TabRule />
            <ViewTab $w={105}>Right</ViewTab><TabRule />
            <ViewTab $w={140}>Layouts...</ViewTab>
          </ViewTabs>
          <Viewport>
            <Scene />
            <ViewLabel>Perspective</ViewLabel>
          </Viewport>
        </CenterColumn>
        <RightPanels />
      </Body>
      <StatusBar>
        <svg width="32" height="24" viewBox="0 0 32 24"><path d="M7 4H26M7 12H26M7 20H26" stroke="#777" strokeWidth="2" /><path d="M0 4H3M0 12H3M0 20H3" stroke="#555" strokeWidth="3" /></svg>
        <StatusText $w={1702}>Command: _Drag</StatusText>
        <StatusText $w={102}>Inches</StatusText>
        <Select>CPlane <UpDown w={11} /></Select>
        <StatusText $w={164}>X: -119.31</StatusText>
        <StatusText $w={171}>Y: 224.96</StatusText>
        <StatusText $w={100}>Z: 0.00</StatusText>
      </StatusBar>
    </AppWindow>
  );
}

/* ---------- dock ---------- */

const DockBar = styled.nav`
  position: absolute;
  left: 98px;
  top: 1652px;
  width: 2684px;
  height: 138px;
  padding: 0 6px;
  display: flex;
  border-radius: 42px;
  background: #dcdcdc;
  box-shadow: 0 0 2px rgba(0, 0, 0, 0.5), inset 0 0 0 1.5px #e8e8e8;
`;
const DockItem = styled.div<{ $run?: boolean }>`
  width: 116.7px;
  flex: none;
  display: flex;
  flex-direction: column;
  align-items: center;
  padding-top: 14px;
  &::after {
    content: '';
    width: 9px;
    height: 9px;
    margin-top: 13px;
    border-radius: 50%;
    background: ${(p) => (p.$run ? '#5b5b5b' : 'transparent')};
  }
`;
const DockRule = styled.i`
  width: 2px;
  height: 102px;
  margin: 18px 25px 0;
  flex: none;
  background: #a4a4a4;
`;
const CloudTile = styled.div`
  width: 88px;
  height: 88px;
  border-radius: 20px;
  background:
    radial-gradient(circle at 75% 108%, #63e06a 0, transparent 42%),
    radial-gradient(circle at 10% 95%, #4f7df2 0, transparent 50%),
    radial-gradient(circle at 55% 8%, #e5301f 0, transparent 58%),
    radial-gradient(circle at 0% 30%, #ec35b4 0, transparent 55%),
    #f3b13a;
`;

const Tile = ({ f, children }: { f: string; children?: React.ReactNode }) => (
  <g><rect x="6" y="6" width="88" height="88" rx="20" fill={f} />{children}</g>
);

const LP = ['#7fe04c', '#f5b53c', '#ee8a34', '#dc3a2c', '#8c9296', '#ee4a62', '#a050d8', '#3f8cf2', '#66cfae'];
const PETALS = ['#f29a38', '#f3e23c', '#b5cf48', '#7cc08a', '#72a9dd', '#8c7cc4', '#c378b4', '#ee5848'];

type DockApp = { n: string; run?: boolean; d: React.ReactNode };

const DOCK: DockApp[] = [
  { n: 'finder', run: true, d: <><clipPath id="fc"><rect x="6" y="6" width="88" height="88" rx="20" /></clipPath><g clipPath="url(#fc)"><rect width="100" height="100" fill="url(#dFind)" /><path d="M53 0C47 20 43 40 43 57H55C54 75 57 90 60 100H100V0Z" fill="#e3e8f0" /></g><path d="M53 6C47 22 43 42 43 57H55" fill="none" stroke="#223" strokeOpacity=".5" strokeWidth="1.5" /><path d="M29 32V38M70 32V38" stroke="#1c2430" strokeWidth="4" strokeLinecap="round" /><path d="M23 64C34 80 66 80 77 64" fill="none" stroke="#1c2430" strokeWidth="3.5" strokeLinecap="round" /></> },
  { n: 'launchpad', d: <Tile f="#eceff1">{LP.map((c, i) => <rect key={c} x={20 + (i % 3) * 21.5} y={20.5 + Math.floor(i / 3) * 21.5} width="16.5" height="16.5" rx="4.5" fill={c} />)}</Tile> },
  { n: 'chrome', run: true, d: <Tile f="#fbfbfb"><circle cx="50" cy="50" r="36" fill="#f6cf5a" /><path d="M50 50L18.800 32A36 36 0 0 1 81.200 32L50 32Z" fill="#cf4e41" /><path d="M18.800 32A36 36 0 0 0 50 86L66 59L50 50L34.400 59Z" fill="#469d63" /><path d="M50 32H82A36 36 0 0 1 50 86L66 59Z" fill="#f6cf5a" /><circle cx="50" cy="50" r="17" fill="#fff" /><circle cx="50" cy="50" r="13" fill="#4b86ec" /></Tile> },
  { n: 'slack', run: true, d: <Tile f="#fff"><g fill="#62c3ea"><rect x="35" y="19" width="13" height="13" rx="6.5" /><rect x="41" y="25" width="7" height="7" /><rect x="18" y="35" width="30" height="13" rx="6" /></g><g fill="#59b482"><rect x="51" y="19" width="13" height="29" rx="6" /><rect x="67" y="35" width="14" height="13" rx="6.5" /></g><g fill="#e3b34e"><rect x="51" y="52" width="30" height="13" rx="6" /><rect x="51" y="68" width="13" height="13" rx="6" /></g><g fill="#ce375c"><rect x="35" y="52" width="13" height="29" rx="6" /><rect x="18" y="52" width="13" height="13" rx="6" /></g></Tile> },
  { n: 'messages', run: true, d: <Tile f="url(#dGreen)"><path d="M50 21C31 21 18 33 18 48C18 58 23 65 31 69C31 73 30 76 28 79C33 78 37 76 40 73C43 74 47 74 50 74C69 74 82 63 82 48S69 21 50 21Z" fill="url(#dWhite)" /></Tile> },
  { n: 'mail', d: <Tile f="url(#dMail)"><rect x="19" y="31" width="62" height="39" rx="5" fill="#f1f1f1" /><path d="M21 33L45 56C48 59 52 59 55 56L79 33M21 68L40 51M79 68L60 51" fill="none" stroke="#9a9a9a" strokeWidth="1.8" /></Tile> },
  { n: 'photos', d: <Tile f="#fcfcfc">{PETALS.map((c, i) => <rect key={c} x="38.5" y="12" width="23" height="38" rx="11.5" fill={c} opacity=".85" transform={`rotate(${i * 45} 50 50)`} />)}</Tile> },
  { n: 'facetime', d: <Tile f="url(#dGreen)"><rect x="18" y="31" width="43" height="38" rx="10" fill="url(#dWhite)" /><path d="M64 44L76 34Q80 32 80 37V63Q80 68 76 66L64 56Z" fill="#e9f5e9" /></Tile> },
  { n: 'calendar', d: <Tile f="#f6f5f3"><path d="M6 33V26A20 20 0 0 1 26 6H74A20 20 0 0 1 94 26V33Z" fill="#e2594f" /><text x="50" y="27" textAnchor="middle" fontFamily={UI} fontSize="18" fontWeight="500" fill="#fff">MAR</text><text x="50" y="80" textAnchor="middle" fontFamily={UI} fontSize="54" fontWeight="300" letterSpacing="-2" fill="#222">10</text></Tile> },
  { n: 'contacts', d: <><path d="M88 36H98V52H88Z" fill="#5aa9e0" /><path d="M88 52H98V66H88Z" fill="#f09a38" /><path d="M88 66H98V80L90 88Z" fill="#6cc964" /><Tile f="url(#dCont)"><path d="M14 8V92" stroke="#8a6430" strokeWidth="2" /><circle cx="52" cy="50" r="27" fill="#a37c44" stroke="#7d5a2a" strokeWidth="2" /><circle cx="52" cy="43" r="9" fill="#86632f" /><path d="M34 69C38 54 66 54 70 69A27 27 0 0 1 34 69Z" fill="#86632f" /></Tile></> },
  { n: 'reminders', d: <Tile f="#fafaf8">{([['#3b7cf0', 28], ['#e5503f', 50], ['#ef9a38', 72]] as [string, number][]).map(([c, y]) => <g key={c}><circle cx="22" cy={y} r="4.5" fill={c} /><circle cx="22" cy={y} r="7" fill="none" stroke={c} strokeWidth="1.5" /><path d={`M38 ${y}H84`} stroke="#b5b5b9" strokeWidth="2" /></g>)}</Tile> },
  { n: 'notes', d: <Tile f="#f5f4ef"><path d="M6 27V26A20 20 0 0 1 26 6H74A20 20 0 0 1 94 26V27Z" fill="#fbd34b" /><path d="M6 29H94" stroke="#b0aea8" strokeWidth="2" /><path d="M8 33H92" stroke="#bdbbb4" strokeDasharray="1.5 2" strokeWidth="1.5" /><path d="M6 50H94M6 72H94" stroke="#d5d4ce" strokeWidth="2" /></Tile> },
  { n: 'podcasts', d: <Tile f="url(#dPod)"><g fill="none" stroke="#fff" strokeWidth="4.5"><path d="M38 73A31 31 0 1 1 62 73" /><path d="M39 61A20 20 0 1 1 61 61" /></g><circle cx="50" cy="44" r="7.5" fill="#fff" /><path d="M43 60Q43 55 50 55T57 60L54 80Q53 83 50 83T46 80Z" fill="#fff" /></Tile> },
  { n: 'appstore', d: <Tile f="url(#dStore)"><g stroke="#fff" strokeWidth="7" strokeLinecap="round"><path d="M54 25L35 60M46 25L73 72M22 61H56M70 61H78M30 69L27 74" /></g></Tile> },
  { n: 'settings', d: <Tile f="url(#dSet)"><circle cx="50" cy="50" r="37" fill="#333" stroke="#555" strokeWidth="2" /><circle cx="50" cy="50" r="32" fill="none" stroke="#b3b3b3" strokeWidth="5" strokeDasharray="2 1.5" /><circle cx="50" cy="50" r="26" fill="#4a4a4a" stroke="#aeaeae" strokeWidth="4" /><circle cx="50" cy="50" r="8" fill="#555" stroke="#aeaeae" strokeWidth="2.5" /><path d="M58 50H76M46 43L36 28M46 57L36 72" stroke="#aeaeae" strokeWidth="5" /></Tile> },
  { n: 'cc', d: <><foreignObject x="6" y="6" width="88" height="88"><CloudTile /></foreignObject><g fill="none" stroke="#fff" strokeLinecap="round"><path d="M38 74C25 74 18 65 18 55C18 45 26 37 36 37C41 28 49 25 57 25C72 25 82 36 82 50C82 64 72 74 60 74Z" strokeWidth="3.6" /><path d="M64 65C56 66 53 62 49 56C45 50 42 46 37 47C28 49 28 63 38 63C42 63 44 61 46 59" strokeWidth="6.5" /><path d="M45 42C50 33 72 33 72 49C72 62 60 64 55 56L48 46" strokeWidth="6.5" /></g></> },
  { n: 'github', run: true, d: <Tile f="url(#dGit)"><circle cx="50" cy="50" r="36" fill="#f1f1f4" /><path d="M41 86V74C38 75 32 75 29 68C28 66 27 65 25 64C28 62 32 64 34 67C37 71 39 70 41.500 69C42 67 43 65 44 64C32 62 28 55 28 46C28 41 30 38 32 36C31 33 31 30 32 27C36 27 40 30 41.500 31C47 29.500 53 29.500 58.500 31C60 30 64 27 68 27C69 30 69 33 68 36C70 38 72 41 72 46C72 55 68 62 56 64C58 66 59 69 59 72V86Z" fill="#67308e" /></Tile> },
  { n: 'sublime', run: true, d: <Tile f="#464646"><path d="M74 20V37L54 43.500L71 48.500Q74 49.500 74 52V66L26 81V64L46 57.500L29 52.500Q26 51.500 26 49V35Z" fill="#f19a38" /><path d="M74 66L46 57.500L54 55Z" fill="#c9761c" opacity=".7" /></Tile> },
];

const DOCK_TAIL: DockApp[] = [
  { n: 'ae', d: <Tile f="#00005b"><text x="50" y="67" textAnchor="middle" fontFamily='"Open Sans", sans-serif' fontWeight="700" fontSize="49" letterSpacing="-1" fill="#9999ff">Ae</text></Tile> },
  { n: 'ai', run: true, d: <Tile f="#2b0301"><text x="50" y="67" textAnchor="middle" fontFamily='"Open Sans", sans-serif' fontWeight="700" fontSize="49" letterSpacing="-1" fill="#f59b38">Ai</text></Tile> },
  { n: 'rhino', run: true, d: <><clipPath id="rh"><path d="M2 15Q0 11 4 9L80 -4Q86 -5 87 0L101 84Q101 89 97 90L19 102Q15 103 14 98Z" /></clipPath><g clipPath="url(#rh)"><rect x="-5" y="-8" width="115" height="115" fill="#5b5e66" /><path d="M10 58L105 54V110H10Z" fill="#3d3936" /><path d="M0 12L18 6C12 22 16 34 30 44L20 50L10 48Z" fill="#f4f4f4" /><path d="M24 4C20 18 30 38 44 52L74 44C84 40 86 28 92 34C98 50 88 58 80 62L82 88L66 92L50 80L40 70C28 66 20 64 10 54L28 46C24 30 18 20 24 4Z" fill="#f4f2f1" /><path d="M12 58C26 64 36 70 48 82L60 96L16 104Z" fill="#34302e" /><path d="M10 56C22 54 30 62 34 72L40 72C36 60 28 52 14 50Z" fill="#2a2726" /><path d="M30 55L42 60L38 67Z" fill="#d8453c" stroke="#111" strokeWidth="1.5" /><path d="M58 68C66 58 78 66 80 88L66 90C70 82 68 72 58 68Z" fill="#cbc5c2" stroke="#222" strokeWidth="2" /><text x="54" y="37" fontFamily='"Liberation Sans", sans-serif' fontWeight="700" fontSize="46" fill="#9c9ea4" transform="rotate(-8 60 30)">7</text></g></> },
];

const DockSvg = ({ children }: { children: React.ReactNode }) => (
  <svg width="99" height="99" viewBox="0 0 100 100" overflow="visible">{children}</svg>
);

const grad = (id: string, a: string, b: string) => (
  <linearGradient id={id} x1="0" x2="0" y1="0" y2="1"><stop offset="0" stopColor={a} /><stop offset="1" stopColor={b} /></linearGradient>
);

function Dock() {
  return (
    <DockBar>
      <HiddenSvg width="0" height="0">
        <defs>
          {grad('dFind', '#64cdf8', '#3a72ec')}
          {grad('dGreen', '#87ee7a', '#55bb48')}
          {grad('dWhite', '#ffffff', '#cfe8cb')}
          {grad('dMail', '#3a6fe8', '#5cc2f8')}
          {grad('dPod', '#b765e6', '#7429ac')}
          {grad('dStore', '#52b2ee', '#2b5cd8')}
          {grad('dSet', '#d5dfe4', '#8f8f8c')}
          {grad('dGit', '#8238a6', '#5b3087')}
          {grad('dCont', '#b08a50', '#9c7342')}
        </defs>
      </HiddenSvg>
      {DOCK.map((i) => <DockItem key={i.n} $run={i.run}><DockSvg>{i.d}</DockSvg></DockItem>)}
      <DockRule />
      {DOCK_TAIL.map((i) => <DockItem key={i.n} $run={i.run}><DockSvg>{i.d}</DockSvg></DockItem>)}
      <DockRule />
      <DockItem>
        <DockSvg>
          <path d="M12 16L24 96Q25 99 30 99H70Q75 99 76 96L88 16Z" fill="#e8e8e8" stroke="#cfcfcf" />
          <path d="M18 40L26 90M50 40V92M82 40L74 90" stroke="#fff" strokeWidth="5" opacity=".5" />
          <ellipse cx="50" cy="13" rx="38" ry="9" fill="#bdbdbd" stroke="#eee" strokeWidth="2" />
          <path d="M20 12L28 2L36 10L40 -2L50 8L60 -2L66 8L78 4L82 14L66 20L50 18L34 20Z" fill="#f4f4f4" stroke="#888" strokeWidth="1" />
          <path d="M24 12L32 8L30 18ZM44 8L54 14L46 18Z" fill="#4a4a4a" /><path d="M56 8L64 14L58 18Z" fill="#2f63c4" /><path d="M36 10L42 8L42 16Z" fill="#46b8c4" /><path d="M66 10L72 10L70 18Z" fill="#c8642c" />
        </DockSvg>
      </DockItem>
    </DockBar>
  );
}

export default function App() {
  return (
    <Desktop>
      <Global />
      <Wallpaper />
      <IconDefs />
      <ThumbFile />
      <BrowserShadow />
      <Browser />
      <AppShadow />
      <FileName><span>t</span><span>AM</span></FileName>
      <Modeller />
      <Dock />
      <MenuBar />
    </Desktop>
  );
}
